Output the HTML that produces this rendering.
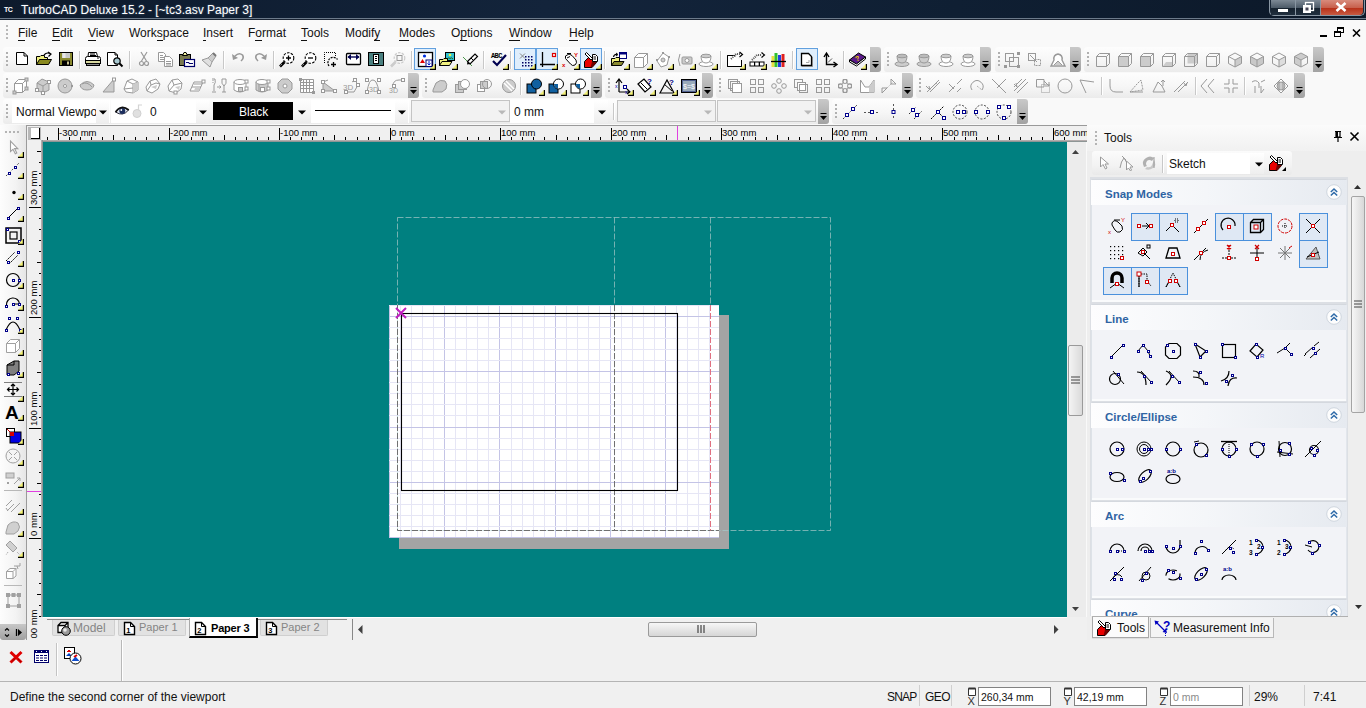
<!DOCTYPE html>
<html><head><meta charset="utf-8"><style>
*{margin:0;padding:0;box-sizing:border-box}
html,body{width:1366px;height:708px;overflow:hidden;background:#f9f9f9;font-family:"Liberation Sans",sans-serif;font-size:12px;color:#000}
body{position:relative}
.a{position:absolute}
svg{position:absolute;overflow:visible}
.t{position:absolute;white-space:nowrap;line-height:1}
u{text-decoration:none;border-bottom:1px solid currentColor;padding-bottom:0px}
</style></head><body>
<div class="a" style="left:0px;top:0px;width:1366px;height:18px;background:linear-gradient(90deg,#0d1a2c,#13243b 40%,#0f1f33 70%,#0c1828)"></div>
<div class="a" style="left:0px;top:18px;width:1366px;height:1px;background:#6c7a8a"></div>
<div class="a" style="left:0px;top:19px;width:1366px;height:1px;background:#1a2433"></div>
<div class="t" style="left:4px;top:6px;font-size:7px;font-weight:bold;color:#fff;letter-spacing:-0.5px">TC</div>
<div class="t" style="left:21px;top:4px;font-size:12px;color:#fff;text-shadow:0 0 2px rgba(160,190,220,0.5)">TurboCAD Deluxe 15.2 - [~tc3.asv Paper 3]</div>
<div class="a" style="left:1269px;top:0px;width:96px;height:16px;border:1px solid #8996a3;border-top:none;border-radius:0 0 5px 5px;background:#1b2838"></div>
<div class="a" style="left:1271px;top:0px;width:25px;height:15px;background:linear-gradient(#7d8995,#4e5c6a 50%,#16222f 55%,#202f3e);border-right:1px solid #8996a3"></div>
<div class="a" style="left:1296px;top:0px;width:25px;height:15px;background:linear-gradient(#7d8995,#4e5c6a 50%,#16222f 55%,#202f3e);border-right:1px solid #8996a3"></div>
<div class="a" style="left:1321px;top:0px;width:42px;height:15px;background:linear-gradient(#d88b7c,#c8614d 50%,#b8321a 56%,#c75a42);border-radius:0 0 4px 0"></div>
<div class="a" style="left:1278px;top:9px;width:10px;height:3px;background:#fff"></div>
<svg style="left:1302px;top:1px" width="14" height="13" viewBox="0 0 14 13" ><rect x="3.5" y="1.5" width="8" height="8" fill="none" stroke="#fff" stroke-width="1.3"/><rect x="1" y="4" width="8" height="8" fill="#fff"/><rect x="3.5" y="6.5" width="3" height="3" fill="#445"/></svg>
<svg style="left:1335px;top:2px" width="12" height="10" viewBox="0 0 12 10" ><path d="M1.5 1 L10.5 9 M10.5 1 L1.5 9" stroke="#fff" stroke-width="2.6"/></svg>
<div class="a" style="left:6px;top:25px;width:2px;height:2px;background:#b8b8b8"></div>
<div class="a" style="left:6px;top:29px;width:2px;height:2px;background:#b8b8b8"></div>
<div class="a" style="left:6px;top:33px;width:2px;height:2px;background:#b8b8b8"></div>
<div class="a" style="left:6px;top:37px;width:2px;height:2px;background:#b8b8b8"></div>
<div class="t" style="left:18px;top:27px;font-size:12px;color:#111"><u>F</u>ile</div>
<div class="t" style="left:52px;top:27px;font-size:12px;color:#111"><u>E</u>dit</div>
<div class="t" style="left:88px;top:27px;font-size:12px;color:#111"><u>V</u>iew</div>
<div class="t" style="left:129px;top:27px;font-size:12px;color:#111">Work<u>s</u>pace</div>
<div class="t" style="left:203px;top:27px;font-size:12px;color:#111"><u>I</u>nsert</div>
<div class="t" style="left:248px;top:27px;font-size:12px;color:#111">F<u>o</u>rmat</div>
<div class="t" style="left:301px;top:27px;font-size:12px;color:#111"><u>T</u>ools</div>
<div class="t" style="left:345px;top:27px;font-size:12px;color:#111">Modif<u>y</u></div>
<div class="t" style="left:399px;top:27px;font-size:12px;color:#111"><u>M</u>odes</div>
<div class="t" style="left:451px;top:27px;font-size:12px;color:#111">O<u>p</u>tions</div>
<div class="t" style="left:509px;top:27px;font-size:12px;color:#111"><u>W</u>indow</div>
<div class="t" style="left:569px;top:27px;font-size:12px;color:#111"><u>H</u>elp</div>
<div class="a" style="left:1320px;top:35px;width:7px;height:2px;background:#000"></div>
<svg style="left:1334px;top:27px" width="10" height="10" viewBox="0 0 10 10" ><rect x="3.5" y="0.5" width="6" height="5" fill="none" stroke="#000" stroke-width="1"/><rect x="3" y="0" width="7" height="2" fill="#000"/><rect x="0.5" y="4.5" width="6" height="5" fill="#fff" stroke="#000" stroke-width="1"/><rect x="0" y="4" width="7" height="2" fill="#000"/></svg>
<svg style="left:1352px;top:29px" width="9" height="8" viewBox="0 0 9 8" ><path d="M1 0.5 L8 7.5 M8 0.5 L1 7.5" stroke="#000" stroke-width="1.6"/></svg>
<div class="a" style="left:3px;top:47px;width:878px;height:25px;background:linear-gradient(#fdfdfd,#f6f6f6 55%,#ebebeb);border-radius:3px"></div>
<div class="a" style="left:6px;top:52px;width:2px;height:2px;background:#b0b0b0"></div>
<div class="a" style="left:6px;top:56px;width:2px;height:2px;background:#b0b0b0"></div>
<div class="a" style="left:6px;top:60px;width:2px;height:2px;background:#b0b0b0"></div>
<div class="a" style="left:6px;top:64px;width:2px;height:2px;background:#b0b0b0"></div>
<div class="a" style="left:870px;top:47px;width:11px;height:25px;background:linear-gradient(#c9c9c9,#a2a2a2);border-radius:0 3px 3px 0"></div>
<svg style="left:872px;top:61px" width="7" height="8" viewBox="0 0 7 8" ><path d="M0.5 0.5 H6.5" stroke="#000"/><path d="M0 3 H7 L3.5 7 Z" fill="#000"/><path d="M1 7.5 L3.5 7.5" stroke="#fff" stroke-width="0"/></svg>
<div class="a" style="left:79px;top:51px;width:1px;height:18px;background:#c8c8c8;box-shadow:1px 0 0 #fff"></div>
<div class="a" style="left:129px;top:51px;width:1px;height:18px;background:#c8c8c8;box-shadow:1px 0 0 #fff"></div>
<div class="a" style="left:223px;top:51px;width:1px;height:18px;background:#c8c8c8;box-shadow:1px 0 0 #fff"></div>
<div class="a" style="left:273px;top:51px;width:1px;height:18px;background:#c8c8c8;box-shadow:1px 0 0 #fff"></div>
<div class="a" style="left:411px;top:51px;width:1px;height:18px;background:#c8c8c8;box-shadow:1px 0 0 #fff"></div>
<div class="a" style="left:414px;top:48px;width:22px;height:22px;background:#dfeefc;border:1px solid #62a0de"></div>
<div class="a" style="left:483px;top:51px;width:1px;height:18px;background:#c8c8c8;box-shadow:1px 0 0 #fff"></div>
<div class="a" style="left:510px;top:51px;width:1px;height:18px;background:#c8c8c8;box-shadow:1px 0 0 #fff"></div>
<div class="a" style="left:514px;top:48px;width:22px;height:22px;background:#dfeefc;border:1px solid #62a0de"></div>
<div class="a" style="left:536px;top:48px;width:22px;height:22px;background:#dfeefc;border:1px solid #62a0de"></div>
<div class="a" style="left:580px;top:48px;width:22px;height:22px;background:#dfeefc;border:1px solid #62a0de"></div>
<div class="a" style="left:604px;top:51px;width:1px;height:18px;background:#c8c8c8;box-shadow:1px 0 0 #fff"></div>
<div class="a" style="left:720px;top:51px;width:1px;height:18px;background:#c8c8c8;box-shadow:1px 0 0 #fff"></div>
<div class="a" style="left:792px;top:51px;width:1px;height:18px;background:#c8c8c8;box-shadow:1px 0 0 #fff"></div>
<div class="a" style="left:796px;top:48px;width:22px;height:22px;background:#dfeefc;border:1px solid #62a0de"></div>
<div class="a" style="left:843px;top:51px;width:1px;height:18px;background:#c8c8c8;box-shadow:1px 0 0 #fff"></div>
<svg style="left:16px;top:52px" width="16" height="16" viewBox="0 0 16 16" ><path d="M0.5 0.5 H8 L11.5 4 V12.5 H0.5 Z" fill="#fff" stroke="#000"/><path d="M8 0.5 V4 H11.5" fill="none" stroke="#000"/></svg>
<svg style="left:36px;top:52px" width="16" height="16" viewBox="0 0 16 16" ><path d="M0.5 4.5 H4 L5 3.5 H8.5 V5.5 H11.5 V12.5 H0.5 Z" fill="#f0f080" stroke="#000"/><path d="M0.5 12.5 L3.5 7.5 H15.5 L12.5 12.5 Z" fill="#8a8a20" stroke="#000"/><path d="M8 3 Q10.5 0 14 1.5" fill="none" stroke="#000" stroke-width="1.2"/><path d="M12 0 L15 2 L12.5 4.5" fill="none" stroke="#000" stroke-width="1.2"/></svg>
<svg style="left:59px;top:52px" width="16" height="16" viewBox="0 0 16 16" ><rect x="0.5" y="0.5" width="13" height="13" fill="#8a8a30" stroke="#000"/><rect x="3" y="1" width="8" height="5" fill="#c8c8c8"/><rect x="3.5" y="1" width="3" height="5" fill="#e8e8e8"/><rect x="3" y="8.5" width="8" height="5" fill="#000"/><rect x="8" y="9.5" width="2" height="3" fill="#c8c090"/></svg>
<svg style="left:85px;top:52px" width="16" height="16" viewBox="0 0 16 16" ><path d="M3.5 0.5 H11.5 L12.5 4.5 H3 Z" fill="#fff" stroke="#000"/><path d="M5 2 H10 M5 3.5 H11" stroke="#000"/><path d="M0.5 6.5 Q0.5 4.5 2.5 4.5 H13.5 Q15.5 4.5 15.5 6.5 V9.5 H0.5 Z" fill="#fff" stroke="#000"/><rect x="0.5" y="8.5" width="15" height="3" fill="#d8d8a0" stroke="#000"/><rect x="1.5" y="11.5" width="13" height="2" fill="#888" stroke="#000"/><path d="M12 6 H14" stroke="#000"/></svg>
<svg style="left:107px;top:52px" width="16" height="16" viewBox="0 0 16 16" ><path d="M0.5 0.5 H8 L10.5 3 V13.5 H0.5 Z" fill="#fff" stroke="#000"/><path d="M8 0.5 V3 H10.5" fill="none" stroke="#000"/><circle cx="10" cy="9" r="3.2" fill="#a8c8d0" stroke="#000" stroke-width="1.2"/><path d="M12.3 11.3 L15.5 14.5" stroke="#000" stroke-width="2"/></svg>
<svg style="left:139px;top:52px" width="16" height="16" viewBox="0 0 16 16" ><path d="M2 0 L7.5 9 M8 0 L2.5 9" stroke="#999999" stroke-width="1.2"/><circle cx="2.5" cy="11.5" r="2" fill="none" stroke="#999999" stroke-width="1.2"/><circle cx="7.5" cy="11.5" r="2" fill="none" stroke="#999999" stroke-width="1.2"/></svg>
<svg style="left:158px;top:52px" width="16" height="16" viewBox="0 0 16 16" ><path d="M0.5 0.5 H5.5 L7.5 2.5 V9.5 H0.5 Z" fill="#fff" stroke="#999999"/><path d="M2 3.5 H5 M2 5.5 H6 M2 7.5 H6" stroke="#999999"/><path d="M6.5 4.5 H11.5 L14.5 7.5 V14.5 H6.5 Z" fill="#fff" stroke="#999999"/><path d="M8 9.5 H13 M8 11.5 H13 M8 13 H13" stroke="#999999"/></svg>
<svg style="left:179px;top:52px" width="16" height="16" viewBox="0 0 16 16" ><rect x="0.5" y="2.5" width="11" height="11" fill="#7a7a50" stroke="#000"/><path d="M3.5 3.5 L5 0.5 H7 L8.5 3.5 Z" fill="#f0f0a0" stroke="#000"/><rect x="5.5" y="7.5" width="10" height="7" fill="#fff" stroke="#00006a" stroke-width="1.2"/><path d="M7 10.5 H10 V11.5 H14" fill="none" stroke="#00006a"/></svg>
<svg style="left:201px;top:52px" width="16" height="16" viewBox="0 0 16 16" ><path d="M1 8 L7 6 L11 10 L9 15 Z" fill="#e0e0e0" stroke="#999999"/><path d="M7 6 L12 1 L15 4 L11 10" fill="#cccccc" stroke="#999999"/><path d="M12 1 L15 4" stroke="#777" stroke-width="2"/></svg>
<svg style="left:232px;top:52px" width="16" height="16" viewBox="0 0 16 16" ><path d="M3 4 Q7 0 10.5 3 Q12.5 6 9 9" fill="none" stroke="#999999" stroke-width="1.6"/><path d="M0 2 L1 8 L6 6 Z" fill="#999999"/></svg>
<svg style="left:254px;top:52px" width="16" height="16" viewBox="0 0 16 16" ><path d="M10 4 Q6 0 2.5 3 Q0.5 6 4 9" fill="none" stroke="#999999" stroke-width="1.6"/><path d="M13 2 L12 8 L7 6 Z" fill="#999999"/></svg>
<svg style="left:279px;top:52px" width="16" height="16" viewBox="0 0 16 16" ><circle cx="9.5" cy="6" r="5.3" fill="#fff" stroke="#000" stroke-width="1.1" stroke-dasharray="2.6 1.2"/><path d="M7 6 H12 M9.5 3.5 V8.5" stroke="#000" stroke-width="1.3"/><path d="M5.5 10 L1 14.5" stroke="#000" stroke-width="2.6"/><path d="M3 12 L1.5 13.5" stroke="#888" stroke-width="1"/></svg>
<svg style="left:301px;top:52px" width="16" height="16" viewBox="0 0 16 16" ><circle cx="9.5" cy="6" r="5.3" fill="#fff" stroke="#000" stroke-width="1.1" stroke-dasharray="2.6 1.2"/><path d="M7 6 H12" stroke="#000" stroke-width="1.3"/><path d="M5.5 10 L1 14.5" stroke="#000" stroke-width="2.6"/><path d="M3 12 L1.5 13.5" stroke="#888" stroke-width="1"/></svg>
<svg style="left:324px;top:52px" width="16" height="16" viewBox="0 0 16 16" ><path d="M0.5 11 V0.5 H11.5 V5" fill="none" stroke="#000" stroke-dasharray="1 1"/><path d="M5 14 A5 5 0 0 1 13.5 7.5" fill="none" stroke="#000" stroke-width="1.2" stroke-dasharray="2 1"/><path d="M9.5 10 V15 M7 12.5 H12" stroke="#000" stroke-width="1.3"/></svg>
<svg style="left:346px;top:52px" width="16" height="16" viewBox="0 0 16 16" ><rect x="0.5" y="1.5" width="14" height="11" rx="1" fill="#fff" stroke="#000" stroke-width="1.3"/><path d="M2 5 H13" stroke="#000050" stroke-width="1.4"/><path d="M1.5 5 L5 2 V8 Z M13.5 5 L10 2 V8 Z" fill="#000050"/></svg>
<svg style="left:368px;top:52px" width="16" height="16" viewBox="0 0 16 16" ><rect x="0.5" y="0.5" width="15" height="13" fill="#4a8080" stroke="#000"/><rect x="5.5" y="2.5" width="5" height="9" fill="#fff" stroke="#000"/><path d="M7 4.5 H9 M7 6.5 H9 M7 8.5 H9" stroke="#000"/></svg>
<svg style="left:390px;top:52px" width="16" height="16" viewBox="0 0 16 16" ><circle cx="9.5" cy="6" r="5.3" fill="none" stroke="#cccccc" stroke-width="1.2" stroke-dasharray="2.6 1.2"/><rect x="7" y="3.5" width="5" height="5" fill="none" stroke="#999999"/><path d="M5.5 10 L1 14.5" stroke="#cccccc" stroke-width="2.6"/></svg>
<svg style="left:418px;top:52px" width="16" height="16" viewBox="0 0 16 16" ><rect x="0.5" y="0.5" width="14" height="14" fill="#fff" stroke="#000" stroke-width="1.3"/><circle cx="6.5" cy="4" r="1.6" fill="#0030e0"/><path d="M2 11 L4.5 7 L7 11 Z" fill="#e00000"/><rect x="8" y="8" width="6" height="6.5" fill="#fff" stroke="#00007a"/><path d="M11 9 V13 M9.5 11.5 L11 13 L12.5 11.5" stroke="#0020d0" fill="none"/></svg>
<svg style="left:429.6px;top:64px" width="6" height="6" viewBox="0 0 6 6" ><path d="M0 5 L5 0 V5 Z" fill="#f2f078"/><path d="M0 5.4 H5.4 V0" fill="none" stroke="#000" stroke-width="1.2"/></svg>
<svg style="left:439px;top:52px" width="16" height="16" viewBox="0 0 16 16" ><rect x="6.5" y="0.5" width="9" height="8" fill="#30c0d0" stroke="#000"/><circle cx="11" cy="3" r="1.3" fill="#f0f040"/><path d="M8 7 Q10 5 11 6.5 Q12.5 5 14 7" fill="none" stroke="#206020"/><path d="M0.5 7.5 H4 L5 6.5 H8.5 V13.5 H0.5 Z" fill="#f0f080" stroke="#000"/><path d="M0.5 13.5 L3 9.5 H13 L10.5 13.5 Z" fill="#f0f080" stroke="#000"/></svg>
<svg style="left:451.6px;top:64px" width="6" height="6" viewBox="0 0 6 6" ><path d="M0 5 L5 0 V5 Z" fill="#f2f078"/><path d="M0 5.4 H5.4 V0" fill="none" stroke="#000" stroke-width="1.2"/></svg>
<svg style="left:462px;top:52px" width="16" height="16" viewBox="0 0 16 16" ><path d="M1 5 L10 14" stroke="#208020" stroke-width="0.8"/><path d="M5.5 9.5 L13 2 L15.5 4.5 L8 12 Z" fill="#fff" stroke="#000" stroke-width="1.2"/><path d="M5.5 9.5 L8 12 L5 12.5 Z" fill="#000"/><path d="M9 6 L11.5 8.5" stroke="#000"/></svg>
<svg style="left:491px;top:52px" width="16" height="16" viewBox="0 0 16 16" ><text x="0" y="6" font-size="7" font-family="Liberation Mono" font-weight="bold" fill="#000" letter-spacing="-0.6">ABC</text><path d="M2 9 L6 13 L15 3" fill="none" stroke="#000050" stroke-width="2.2"/></svg>
<svg style="left:502.6px;top:64px" width="6" height="6" viewBox="0 0 6 6" ><path d="M0 5 L5 0 V5 Z" fill="#f2f078"/><path d="M0 5.4 H5.4 V0" fill="none" stroke="#000" stroke-width="1.2"/></svg>
<svg style="left:518px;top:52px" width="16" height="16" viewBox="0 0 16 16" ><path d="M2 1.5 L7 6.5 M7 1.5 L2 6.5" stroke="#888"/><rect x="4" y="10" width="1.5" height="1.5" fill="#000060"/><rect x="4" y="13" width="1.5" height="1.5" fill="#000060"/><rect x="7" y="4" width="1.5" height="1.5" fill="#000060"/><rect x="7" y="7" width="1.5" height="1.5" fill="#000060"/><rect x="7" y="10" width="1.5" height="1.5" fill="#000060"/><rect x="7" y="13" width="1.5" height="1.5" fill="#000060"/><rect x="10" y="4" width="1.5" height="1.5" fill="#000060"/><rect x="10" y="7" width="1.5" height="1.5" fill="#000060"/><rect x="10" y="10" width="1.5" height="1.5" fill="#000060"/><rect x="10" y="13" width="1.5" height="1.5" fill="#000060"/><rect x="13" y="4" width="1.5" height="1.5" fill="#000060"/><rect x="13" y="7" width="1.5" height="1.5" fill="#000060"/><rect x="13" y="10" width="1.5" height="1.5" fill="#000060"/><rect x="13" y="13" width="1.5" height="1.5" fill="#000060"/></svg>
<svg style="left:529.6px;top:64px" width="6" height="6" viewBox="0 0 6 6" ><path d="M0 5 L5 0 V5 Z" fill="#f2f078"/><path d="M0 5.4 H5.4 V0" fill="none" stroke="#000" stroke-width="1.2"/></svg>
<svg style="left:537px;top:52px" width="16" height="16" viewBox="0 0 16 16" ><path d="M5.5 0 V15 M3 12.5 H18" stroke="#000" stroke-width="1.3"/><rect x="15.5" y="1.5" width="3" height="3" fill="#fff" stroke="#d00" stroke-width="1.2"/></svg>
<svg style="left:551.6px;top:64px" width="6" height="6" viewBox="0 0 6 6" ><path d="M0 5 L5 0 V5 Z" fill="#f2f078"/><path d="M0 5.4 H5.4 V0" fill="none" stroke="#000" stroke-width="1.2"/></svg>
<svg style="left:563px;top:52px" width="16" height="16" viewBox="0 0 16 16" ><path d="M4 1.5 H8 M2.5 4 L6 2 L9 3.5 L13 8 Q14.5 11 12 13 Q9.5 14.5 7.5 12 L2.5 6.5 Z M4 6 L7 4.5" fill="#fff" stroke="#000"/><text x="11" y="5" font-size="6" font-weight="bold" fill="#d00">Y</text><text x="-1" y="15" font-size="6" font-weight="bold" fill="#d00">x</text></svg>
<svg style="left:573.6px;top:64px" width="6" height="6" viewBox="0 0 6 6" ><path d="M0 5 L5 0 V5 Z" fill="#f2f078"/><path d="M0 5.4 H5.4 V0" fill="none" stroke="#000" stroke-width="1.2"/></svg>
<svg style="left:584px;top:52px" width="16" height="16" viewBox="0 0 16 16" ><path d="M0.5 9.5 L4.5 5.5 L8.5 7.5 L12.5 10.5 L8 15.5 H0.5 Z" fill="#e80000" stroke="#000"/><path d="M8.5 8 L12.5 10.5 L8 15.5 H6.5 Z" fill="#700000"/><path d="M1 2 L2.5 0.5 L8.5 6.5 L7 8 Z" fill="#fff" stroke="#000"/><path d="M8.5 2.5 H11.5 L13.5 4.5 V9.5 H8.5 Z" fill="#fff" stroke="#000"/><path d="M9.5 5 H12 M9.5 7 H12" stroke="#000"/></svg>
<svg style="left:595.6px;top:64px" width="6" height="6" viewBox="0 0 6 6" ><path d="M0 5 L5 0 V5 Z" fill="#f2f078"/><path d="M0 5.4 H5.4 V0" fill="none" stroke="#000" stroke-width="1.2"/></svg>
<svg style="left:611px;top:52px" width="16" height="16" viewBox="0 0 16 16" ><rect x="8.5" y="0.5" width="7" height="6" fill="#fff" stroke="#00007a"/><rect x="8.5" y="0.5" width="7" height="2" fill="#00007a"/><path d="M0.5 6.5 H4 L5 5.5 H8.5 V13.5 H0.5 Z" fill="#f0f080" stroke="#000"/><path d="M0.5 13.5 L3 9.5 H13 L10.5 13.5 Z" fill="#8a8a30" stroke="#000"/><path d="M2.5 5 Q3 2 6 2.5" fill="none" stroke="#000" stroke-width="1.2"/><path d="M5 1 L7 2.5 L5 4" fill="none" stroke="#000"/></svg>
<svg style="left:623.6px;top:64px" width="6" height="6" viewBox="0 0 6 6" ><path d="M0 5 L5 0 V5 Z" fill="#f2f078"/><path d="M0 5.4 H5.4 V0" fill="none" stroke="#000" stroke-width="1.2"/></svg>
<svg style="left:633px;top:52px" width="16" height="16" viewBox="0 0 16 16" ><path d="M1.5 5.5 L5.5 1.5 H14.5 V11.5 L10.5 15.5 H1.5 Z M1.5 5.5 H10.5 V15.5 M10.5 5.5 L14.5 1.5" fill="#fff" stroke="#999999"/></svg>
<svg style="left:646.6px;top:64px" width="6" height="6" viewBox="0 0 6 6" ><path d="M0 5 L5 0 V5 Z" fill="#f2f078"/><path d="M0 5.4 H5.4 V0" fill="none" stroke="#000" stroke-width="1.2"/></svg>
<svg style="left:655px;top:52px" width="16" height="16" viewBox="0 0 16 16" ><path d="M8 1 L14 5 L12 13 L6 15 L2 9 Z" fill="#fff" stroke="#999999"/><circle cx="8" cy="8" r="2" fill="#cccccc" stroke="#999999"/><rect x="1" y="7" width="2" height="2" fill="#999999"/><rect x="13" y="4" width="2" height="2" fill="#999999"/><rect x="7" y="0" width="2" height="2" fill="#999999"/></svg>
<svg style="left:667.6px;top:64px" width="6" height="6" viewBox="0 0 6 6" ><path d="M0 5 L5 0 V5 Z" fill="#f2f078"/><path d="M0 5.4 H5.4 V0" fill="none" stroke="#000" stroke-width="1.2"/></svg>
<svg style="left:677px;top:52px" width="16" height="16" viewBox="0 0 16 16" ><path d="M3 2 Q0 8 3 14" fill="none" stroke="#999999"/><rect x="5" y="5" width="10" height="7" rx="1" fill="#cccccc" stroke="#999999"/><circle cx="10" cy="8.5" r="2" fill="#fff" stroke="#999999"/></svg>
<svg style="left:689.6px;top:64px" width="6" height="6" viewBox="0 0 6 6" ><path d="M0 5 L5 0 V5 Z" fill="#f2f078"/><path d="M0 5.4 H5.4 V0" fill="none" stroke="#000" stroke-width="1.2"/></svg>
<svg style="left:698px;top:52px" width="16" height="16" viewBox="0 0 16 16" ><ellipse cx="8" cy="12" rx="7" ry="2.5" fill="#fff" stroke="#999999"/><path d="M3 4 Q3 11 8 11 Q13 11 13 4 Z" fill="#fff" stroke="#999999"/><ellipse cx="8" cy="4" rx="5" ry="1.8" fill="#cccccc" stroke="#999999"/></svg>
<svg style="left:711.6px;top:64px" width="6" height="6" viewBox="0 0 6 6" ><path d="M0 5 L5 0 V5 Z" fill="#f2f078"/><path d="M0 5.4 H5.4 V0" fill="none" stroke="#000" stroke-width="1.2"/></svg>
<svg style="left:727px;top:52px" width="16" height="16" viewBox="0 0 16 16" ><path d="M0.5 3.5 H8 V4.5 M0.5 3.5 V14.5 H14.5 V8" fill="#fff" stroke="#000"/><path d="M1 4 H8 L8 14 H1 Z" fill="#fff"/><path d="M0.5 3.5 H6 M0.5 3.5 V14.5 H14.5 V8" fill="none" stroke="#000"/><path d="M4 7 L9 2 H13" fill="none" stroke="#555" stroke-width="2" stroke-dasharray="1 1"/><path d="M12.5 0 L15.5 2.5 L12.5 5" fill="none" stroke="#000" stroke-width="1.2"/></svg>
<svg style="left:739.6px;top:64px" width="6" height="6" viewBox="0 0 6 6" ><path d="M0 5 L5 0 V5 Z" fill="#f2f078"/><path d="M0 5.4 H5.4 V0" fill="none" stroke="#000" stroke-width="1.2"/></svg>
<svg style="left:749px;top:52px" width="16" height="16" viewBox="0 0 16 16" ><rect x="0.5" y="9.5" width="15" height="5" fill="#000"/><rect x="1.5" y="10.5" width="3.5" height="3" fill="#fff"/><rect x="6.2" y="10.5" width="3.5" height="3" fill="#fff"/><rect x="11" y="10.5" width="3.5" height="3" fill="#fff"/><path d="M3 8 L8 3 H13" fill="none" stroke="#555" stroke-width="2" stroke-dasharray="1 1"/><path d="M12.5 0.5 L15.5 3 L12.5 5.5" fill="none" stroke="#000" stroke-width="1.2"/></svg>
<svg style="left:760.6px;top:64px" width="6" height="6" viewBox="0 0 6 6" ><path d="M0 5 L5 0 V5 Z" fill="#f2f078"/><path d="M0 5.4 H5.4 V0" fill="none" stroke="#000" stroke-width="1.2"/></svg>
<svg style="left:771px;top:52px" width="16" height="16" viewBox="0 0 16 16" ><rect x="0.5" y="4" width="3" height="11" fill="#e8e040"/><rect x="3.5" y="1" width="3" height="14" fill="#30c030"/><rect x="7" y="3" width="3" height="12" fill="#2040e0"/><rect x="10.5" y="2" width="3" height="13" fill="#e02020"/><path d="M0 9.5 H15" stroke="#000" stroke-width="1.3"/></svg>
<svg style="left:800px;top:52px" width="16" height="16" viewBox="0 0 16 16" ><path d="M1.5 1.5 H8.5 L11.5 4.5 V13.5 H1.5 Z" fill="#fff" stroke="#000" stroke-width="1.3"/><path d="M12.5 5 V14.5 H2" fill="none" stroke="#888"/><path d="M6 10.5 H9 V8" fill="none" stroke="#aaa"/></svg>
<svg style="left:823px;top:52px" width="16" height="16" viewBox="0 0 16 16" ><path d="M3.5 2 V12.5 H13" fill="none" stroke="#000" stroke-width="1.4"/><path d="M1 5 L3.5 1 L6 5 M10.5 10 L14 12.5 L10.5 15" fill="none" stroke="#000" stroke-width="1.4"/><path d="M5 10.5 L9 6.5" stroke="#555"/></svg>
<svg style="left:849px;top:52px" width="16" height="16" viewBox="0 0 16 16" ><path d="M0.5 8 L9.5 1 L16.5 5 L7.5 12 Z" fill="#5a1a8a" stroke="#000"/><path d="M0.5 8 V10 L7.5 14 L16.5 7 V5 L7.5 12 Z" fill="#fff" stroke="#000"/><text x="6.5" y="9" font-size="7" font-weight="bold" fill="#f0d000" transform="rotate(-20 8 7)">?</text></svg>
<svg style="left:860.6px;top:64px" width="6" height="6" viewBox="0 0 6 6" ><path d="M0 5 L5 0 V5 Z" fill="#f2f078"/><path d="M0 5.4 H5.4 V0" fill="none" stroke="#000" stroke-width="1.2"/></svg>
<div class="a" style="left:884px;top:47px;width:107px;height:25px;background:linear-gradient(#fdfdfd,#f6f6f6 55%,#ebebeb);border-radius:3px"></div>
<div class="a" style="left:887px;top:52px;width:2px;height:2px;background:#b0b0b0"></div>
<div class="a" style="left:887px;top:56px;width:2px;height:2px;background:#b0b0b0"></div>
<div class="a" style="left:887px;top:60px;width:2px;height:2px;background:#b0b0b0"></div>
<div class="a" style="left:887px;top:64px;width:2px;height:2px;background:#b0b0b0"></div>
<div class="a" style="left:980px;top:47px;width:11px;height:25px;background:linear-gradient(#c9c9c9,#a2a2a2);border-radius:0 3px 3px 0"></div>
<svg style="left:982px;top:61px" width="7" height="8" viewBox="0 0 7 8" ><path d="M0.5 0.5 H6.5" stroke="#000"/><path d="M0 3 H7 L3.5 7 Z" fill="#000"/><path d="M1 7.5 L3.5 7.5" stroke="#fff" stroke-width="0"/></svg>
<svg style="left:894px;top:52px" width="16" height="16" viewBox="0 0 16 16" ><ellipse cx="8" cy="12" rx="7" ry="2.5" fill="#cccccc" stroke="#999999"/><path d="M3 4 Q3 11 8 11 Q13 11 13 4 Z" fill="#cccccc" stroke="#999999"/><ellipse cx="8" cy="4" rx="5" ry="1.8" fill="#bbb" stroke="#999999"/></svg>
<svg style="left:916px;top:52px" width="16" height="16" viewBox="0 0 16 16" ><ellipse cx="8" cy="12" rx="7" ry="2.5" fill="#cccccc" stroke="#999999"/><path d="M3 4 Q3 11 8 11 Q13 11 13 4 Z" fill="#cccccc" stroke="#999999"/><ellipse cx="8" cy="4" rx="5" ry="1.8" fill="#bbb" stroke="#999999"/></svg>
<svg style="left:938px;top:52px" width="16" height="16" viewBox="0 0 16 16" ><ellipse cx="8" cy="12" rx="7" ry="2.5" fill="#fff" stroke="#999999"/><path d="M3 4 Q3 11 8 11 Q13 11 13 4 Z" fill="#fff" stroke="#999999"/><ellipse cx="8" cy="4" rx="5" ry="1.8" fill="#cccccc" stroke="#999999"/></svg>
<svg style="left:960px;top:52px" width="16" height="16" viewBox="0 0 16 16" ><ellipse cx="8" cy="12" rx="7" ry="2.5" fill="#fff" stroke="#999999"/><path d="M3 4 Q3 11 8 11 Q13 11 13 4 Z" fill="#fff" stroke="#999999"/><ellipse cx="8" cy="4" rx="5" ry="1.8" fill="#cccccc" stroke="#999999"/></svg>
<div class="a" style="left:995px;top:47px;width:86px;height:25px;background:linear-gradient(#fdfdfd,#f6f6f6 55%,#ebebeb);border-radius:3px"></div>
<div class="a" style="left:998px;top:52px;width:2px;height:2px;background:#b0b0b0"></div>
<div class="a" style="left:998px;top:56px;width:2px;height:2px;background:#b0b0b0"></div>
<div class="a" style="left:998px;top:60px;width:2px;height:2px;background:#b0b0b0"></div>
<div class="a" style="left:998px;top:64px;width:2px;height:2px;background:#b0b0b0"></div>
<div class="a" style="left:1070px;top:47px;width:11px;height:25px;background:linear-gradient(#c9c9c9,#a2a2a2);border-radius:0 3px 3px 0"></div>
<svg style="left:1072px;top:61px" width="7" height="8" viewBox="0 0 7 8" ><path d="M0.5 0.5 H6.5" stroke="#000"/><path d="M0 3 H7 L3.5 7 Z" fill="#000"/><path d="M1 7.5 L3.5 7.5" stroke="#fff" stroke-width="0"/></svg>
<svg style="left:1004px;top:52px" width="16" height="16" viewBox="0 0 16 16" ><rect x="1.5" y="1.5" width="8" height="8" fill="none" stroke="#999999"/><rect x="5.5" y="5.5" width="9" height="9" fill="none" stroke="#999999"/><rect x="0" y="13" width="3" height="3" fill="#999999"/><rect x="13" y="0" width="3" height="3" fill="#999999"/><rect x="13" y="13" width="3" height="3" fill="#999999"/></svg>
<svg style="left:1027px;top:52px" width="16" height="16" viewBox="0 0 16 16" ><rect x="1.5" y="1.5" width="7" height="7" fill="none" stroke="#999999"/><rect x="7.5" y="7.5" width="6" height="6" fill="none" stroke="#999999" stroke-dasharray="2 1"/><path d="M3 3 L10 10" stroke="#999999"/></svg>
<svg style="left:1050px;top:52px" width="16" height="16" viewBox="0 0 16 16" ><path d="M4 8 Q3 3 8 2 Q13 3 12 8 L15 14 H1 Z" fill="#fff" stroke="#999999" stroke-width="1.4"/><path d="M4 13 L8 9 L12 13" fill="#cccccc" stroke="#999999"/></svg>
<div class="a" style="left:1084px;top:47px;width:240px;height:25px;background:linear-gradient(#fdfdfd,#f6f6f6 55%,#ebebeb);border-radius:3px"></div>
<div class="a" style="left:1087px;top:52px;width:2px;height:2px;background:#b0b0b0"></div>
<div class="a" style="left:1087px;top:56px;width:2px;height:2px;background:#b0b0b0"></div>
<div class="a" style="left:1087px;top:60px;width:2px;height:2px;background:#b0b0b0"></div>
<div class="a" style="left:1087px;top:64px;width:2px;height:2px;background:#b0b0b0"></div>
<div class="a" style="left:1313px;top:47px;width:11px;height:25px;background:linear-gradient(#c9c9c9,#a2a2a2);border-radius:0 3px 3px 0"></div>
<svg style="left:1315px;top:61px" width="7" height="8" viewBox="0 0 7 8" ><path d="M0.5 0.5 H6.5" stroke="#000"/><path d="M0 3 H7 L3.5 7 Z" fill="#000"/><path d="M1 7.5 L3.5 7.5" stroke="#fff" stroke-width="0"/></svg>
<svg style="left:1095px;top:52px" width="16" height="16" viewBox="0 0 16 16" ><path d="M1.5 4.5 L4.5 1.5 H14.5 V11.5 L11.5 14.5 H1.5 Z M1.5 4.5 H11.5 V14.5 M11.5 4.5 L14.5 1.5" fill="none" stroke="#999999"/></svg>
<svg style="left:1117px;top:52px" width="16" height="16" viewBox="0 0 16 16" ><path d="M1.5 4.5 H11.5 V14.5 H1.5 Z" fill="#cccccc"/><path d="M1.5 4.5 L4.5 1.5 H14.5 V11.5 L11.5 14.5 H1.5 Z M1.5 4.5 H11.5 V14.5 M11.5 4.5 L14.5 1.5" fill="none" stroke="#999999"/></svg>
<svg style="left:1139px;top:52px" width="16" height="16" viewBox="0 0 16 16" ><path d="M1.5 4.5 H11.5 V14.5 H1.5Z" fill="#ccc"/><path d="M1.5 4.5 L4.5 1.5 H14.5 V11.5 L11.5 14.5 H1.5 Z M1.5 4.5 H11.5 V14.5 M11.5 4.5 L14.5 1.5" fill="none" stroke="#999999"/></svg>
<svg style="left:1161px;top:52px" width="16" height="16" viewBox="0 0 16 16" ><path d="M2 14 L5 10 H11 V14 Z" fill="#cccccc"/><path d="M1.5 4.5 L4.5 1.5 H14.5 V11.5 L11.5 14.5 H1.5 Z M1.5 4.5 H11.5 V14.5 M11.5 4.5 L14.5 1.5" fill="none" stroke="#999999"/></svg>
<svg style="left:1183px;top:52px" width="16" height="16" viewBox="0 0 16 16" ><path d="M4.5 1.5 H14.5 V11.5 H4.5 Z" fill="#cccccc"/><path d="M1.5 4.5 L4.5 1.5 H14.5 V11.5 L11.5 14.5 H1.5 Z M1.5 4.5 H11.5 V14.5 M11.5 4.5 L14.5 1.5" fill="none" stroke="#999999"/></svg>
<svg style="left:1205px;top:52px" width="16" height="16" viewBox="0 0 16 16" ><path d="M1.5 4.5 L4.5 1.5 H14.5 V11.5 L11.5 14.5 H1.5 Z M1.5 4.5 H11.5 V14.5 M11.5 4.5 L14.5 1.5" fill="none" stroke="#999999"/></svg>
<svg style="left:1227px;top:52px" width="16" height="16" viewBox="0 0 16 16" ><path d="M8 8 L14.5 4.5 V11.5 L8 15Z" fill="#cccccc"/><path d="M8 1 L14.5 4.5 V11.5 L8 15 L1.5 11.5 V4.5 Z M1.5 4.5 L8 8 L14.5 4.5 M8 8 V15" fill="none" stroke="#999999"/></svg>
<svg style="left:1249px;top:52px" width="16" height="16" viewBox="0 0 16 16" ><path d="M1.5 4.5 L8 8 V15 L1.5 11.5 Z M8 8 L14.5 4.5 V11.5 L8 15Z" fill="#c8c8c8"/><path d="M8 1 L14.5 4.5 V11.5 L8 15 L1.5 11.5 V4.5 Z M1.5 4.5 L8 8 L14.5 4.5 M8 8 V15" fill="none" stroke="#999999"/></svg>
<svg style="left:1271px;top:52px" width="16" height="16" viewBox="0 0 16 16" ><path d="M8 8 L14.5 4.5 V11.5 L8 15Z" fill="#ddd"/><path d="M8 1 L14.5 4.5 V11.5 L8 15 L1.5 11.5 V4.5 Z M1.5 4.5 L8 8 L14.5 4.5 M8 8 V15" fill="none" stroke="#999999"/></svg>
<svg style="left:1293px;top:52px" width="16" height="16" viewBox="0 0 16 16" ><path d="M1.5 4.5 L8 1 L14.5 4.5 L8 8Z M1.5 4.5 L8 8 V15 L1.5 11.5 Z" fill="#ccc"/><path d="M8 1 L14.5 4.5 V11.5 L8 15 L1.5 11.5 V4.5 Z M1.5 4.5 L8 8 L14.5 4.5 M8 8 V15" fill="none" stroke="#999999"/></svg>
<div class="a" style="left:3px;top:73px;width:416px;height:25px;background:linear-gradient(#fdfdfd,#f6f6f6 55%,#ebebeb);border-radius:3px"></div>
<div class="a" style="left:6px;top:78px;width:2px;height:2px;background:#b0b0b0"></div>
<div class="a" style="left:6px;top:82px;width:2px;height:2px;background:#b0b0b0"></div>
<div class="a" style="left:6px;top:86px;width:2px;height:2px;background:#b0b0b0"></div>
<div class="a" style="left:6px;top:90px;width:2px;height:2px;background:#b0b0b0"></div>
<div class="a" style="left:408px;top:73px;width:11px;height:25px;background:linear-gradient(#c9c9c9,#a2a2a2);border-radius:0 3px 3px 0"></div>
<svg style="left:410px;top:87px" width="7" height="8" viewBox="0 0 7 8" ><path d="M0.5 0.5 H6.5" stroke="#000"/><path d="M0 3 H7 L3.5 7 Z" fill="#000"/><path d="M1 7.5 L3.5 7.5" stroke="#fff" stroke-width="0"/></svg>
<svg style="left:13px;top:78px" width="16" height="16" viewBox="0 0 16 16" ><path d="M1.5 5.5 L5.5 1.5 H13.5 V10.5 L9.5 14.5 H1.5 Z M1.5 5.5 H9.5 V14.5 M9.5 5.5 L13.5 1.5" fill="#fff" stroke="#999999"/><rect x="0.0" y="13.0" width="3" height="3" fill="#cccccc" stroke="#999999"/><rect x="12.0" y="0.0" width="3" height="3" fill="#cccccc" stroke="#999999"/><rect x="12.0" y="9.0" width="3" height="3" fill="#cccccc" stroke="#999999"/></svg>
<svg style="left:35px;top:78px" width="16" height="16" viewBox="0 0 16 16" ><path d="M2 5 L7 1 L14 4 V12 L8 15 L2 12 Z" fill="#cccccc" stroke="#999999"/><path d="M2 5 L8 8 L14 4 M8 8 V15" stroke="#999999" fill="none"/><rect x="0.5" y="10.5" width="3" height="3" fill="#fff" stroke="#999999"/><rect x="6.5" y="13.5" width="3" height="3" fill="#fff" stroke="#999999"/><rect x="12.5" y="2.5" width="3" height="3" fill="#fff" stroke="#999999"/></svg>
<svg style="left:57px;top:78px" width="16" height="16" viewBox="0 0 16 16" ><circle cx="8" cy="8" r="7" fill="#cccccc" stroke="#999999"/><circle cx="8" cy="8" r="1.5" fill="#fff" stroke="#999999"/><rect x="14" y="7" width="2" height="2" fill="#999999"/></svg>
<svg style="left:79px;top:78px" width="16" height="16" viewBox="0 0 16 16" ><path d="M1 7 Q8 0 15 7 Q14 12 8 12 Q2 12 1 7 Z" fill="#cccccc" stroke="#999999"/><path d="M3 6 Q8 3 13 9" fill="none" stroke="#999999"/></svg>
<svg style="left:101px;top:78px" width="16" height="16" viewBox="0 0 16 16" ><path d="M2 14 L13 1 V14 Z" fill="#cccccc" stroke="#999999"/><rect x="11.5" y="0" width="3" height="3" fill="#fff" stroke="#999999"/></svg>
<svg style="left:123px;top:78px" width="16" height="16" viewBox="0 0 16 16" ><path d="M1 11 L4 3 L9 1 L15 4 V12 L10 15 L3 14 Z" fill="#fff" stroke="#999999"/><path d="M4 3 L10 6 L15 4 M10 6 V15 M1 11 L10 10" fill="none" stroke="#999999"/><path d="M10 6 L15 4 V12 L10 15 Z" fill="#cccccc"/></svg>
<svg style="left:145px;top:78px" width="16" height="16" viewBox="0 0 16 16" ><path d="M1 9 L5 3 L11 1 L15 6 L13 11 L7 15 L2 13 Z" fill="#fff" stroke="#999999"/><path d="M5 3 L6 7 L11 5 L15 6 M6 7 L2 13" fill="none" stroke="#999999"/><path d="M6 9 L12 7 L11 11 Z" fill="#cccccc"/></svg>
<svg style="left:167px;top:78px" width="16" height="16" viewBox="0 0 16 16" ><path d="M1 8 L5 2 L11 1 L15 5 L14 11 L9 15 L2 13 Z" fill="#fff" stroke="#999999"/><path d="M5 2 L7 7 L15 5 M7 7 L2 13" fill="none" stroke="#999999"/><path d="M8 9 L13 8 L12 12 Z" fill="#cccccc"/><rect x="7" y="13" width="3" height="3" fill="#fff" stroke="#999999"/></svg>
<svg style="left:189px;top:78px" width="16" height="16" viewBox="0 0 16 16" ><path d="M1 13 L5 4 H14 L10 13 Z" fill="#fff" stroke="#999999"/><path d="M3 9 H12 M5 6 H13" stroke="#999999"/><path d="M6 10 H11 L10 13 H5 Z" fill="#cccccc"/><rect x="13" y="2" width="3" height="3" fill="#fff" stroke="#999999"/></svg>
<svg style="left:211px;top:78px" width="16" height="16" viewBox="0 0 16 16" ><path d="M1 1 H4 Q5 5 3 7 V13 M1 14 H5 M11 1 H15 Q16 6 13 8 V14 M11 14 H15 M11 1 Q10 6 13 8 M6 9 H10 M8.5 7.5 L10 9 L8.5 10.5" fill="none" stroke="#999999"/><path d="M2 2 V5" stroke="#999999" stroke-dasharray="1 1"/></svg>
<svg style="left:233px;top:78px" width="16" height="16" viewBox="0 0 16 16" ><path d="M1 4 V12 Q7 16 13 12 V4" fill="#fff" stroke="#999999"/><ellipse cx="7" cy="4" rx="6" ry="2.5" fill="#fff" stroke="#999999"/><rect x="5.5" y="9.5" width="4" height="4" fill="#cccccc" stroke="#999999"/><rect x="12" y="2" width="3" height="3" fill="#fff" stroke="#999999"/><rect x="12" y="9" width="3" height="3" fill="#fff" stroke="#999999"/></svg>
<svg style="left:255px;top:78px" width="16" height="16" viewBox="0 0 16 16" ><path d="M1 4 V12 Q7 16 13 12 V4" fill="#cccccc" stroke="#999999"/><ellipse cx="7" cy="4" rx="6" ry="2.5" fill="#fff" stroke="#999999"/><path d="M4 6 V13" stroke="#999999"/><rect x="5.5" y="9.5" width="4" height="4" fill="#fff" stroke="#999999"/><rect x="12" y="2" width="3" height="3" fill="#fff" stroke="#999999"/><rect x="12" y="9" width="3" height="3" fill="#fff" stroke="#999999"/></svg>
<svg style="left:277px;top:78px" width="16" height="16" viewBox="0 0 16 16" ><path d="M5 1 H11 L15 5 V11 L11 15 H5 L1 11 V5 Z" fill="#cccccc" stroke="#999999"/><circle cx="8" cy="8" r="2" fill="#fff" stroke="#999999"/></svg>
<svg style="left:299px;top:78px" width="16" height="16" viewBox="0 0 16 16" ><path d="M1.5 1.5 H14.5 V14.5 H1.5 Z M1.5 4.5 H14.5 M1.5 7.5 H14.5 M1.5 10.5 H14.5 M4.5 1.5 V14.5 M7.5 1.5 V14.5 M10.5 1.5 V14.5" fill="#fff" stroke="#999999"/><rect x="0" y="0" width="3" height="3" fill="#999999"/><rect x="13" y="13" width="3" height="3" fill="#999999"/></svg>
<svg style="left:321px;top:78px" width="16" height="16" viewBox="0 0 16 16" ><path d="M2 4 L14 13 H2 Z" fill="#cccccc" stroke="#999999"/><path d="M2 4 L7 2" stroke="#999999"/><rect x="0.5" y="2.5" width="3" height="3" fill="#fff" stroke="#999999"/><rect x="12.5" y="11.5" width="3" height="3" fill="#fff" stroke="#999999"/><rect x="0.5" y="11.5" width="3" height="3" fill="#fff" stroke="#999999"/></svg>
<svg style="left:343px;top:78px" width="16" height="16" viewBox="0 0 16 16" ><text x="0" y="12" font-size="8" font-family="Liberation Sans" fill="#999999">3D</text><path d="M9 4 L12 2 L15 7 L11 14 H3" fill="none" stroke="#999999"/><rect x="10.5" y="0.5" width="3" height="3" fill="#fff" stroke="#999999"/><rect x="13.5" y="5.5" width="3" height="3" fill="#fff" stroke="#999999"/><rect x="1.5" y="12.5" width="3" height="3" fill="#fff" stroke="#999999"/></svg>
<svg style="left:365px;top:78px" width="16" height="16" viewBox="0 0 16 16" ><path d="M2 14 Q4 1 8 2 Q12 2 14 14" fill="none" stroke="#999999"/><text x="4" y="14" font-size="7" font-family="Liberation Sans" fill="#999999">3D</text><rect x="0.5" y="0.5" width="3" height="3" fill="#fff" stroke="#999999"/><rect x="12.5" y="0.5" width="3" height="3" fill="#fff" stroke="#999999"/><rect x="0.5" y="12.5" width="3" height="3" fill="#fff" stroke="#999999"/><rect x="12.5" y="12.5" width="3" height="3" fill="#fff" stroke="#999999"/></svg>
<svg style="left:389px;top:78px" width="16" height="16" viewBox="0 0 16 16" ><path d="M4 8 Q4 2 10 2 L14 2" fill="none" stroke="#999999"/><text x="0" y="15" font-size="7" font-family="Liberation Sans" fill="#999999">3D</text><rect x="12.5" y="0.5" width="3" height="3" fill="#fff" stroke="#999999"/><rect x="3.5" y="6.5" width="3" height="3" fill="#fff" stroke="#999999"/></svg>
<div class="a" style="left:422px;top:73px;width:180px;height:25px;background:linear-gradient(#fdfdfd,#f6f6f6 55%,#ebebeb);border-radius:3px"></div>
<div class="a" style="left:425px;top:78px;width:2px;height:2px;background:#b0b0b0"></div>
<div class="a" style="left:425px;top:82px;width:2px;height:2px;background:#b0b0b0"></div>
<div class="a" style="left:425px;top:86px;width:2px;height:2px;background:#b0b0b0"></div>
<div class="a" style="left:425px;top:90px;width:2px;height:2px;background:#b0b0b0"></div>
<div class="a" style="left:591px;top:73px;width:11px;height:25px;background:linear-gradient(#c9c9c9,#a2a2a2);border-radius:0 3px 3px 0"></div>
<svg style="left:593px;top:87px" width="7" height="8" viewBox="0 0 7 8" ><path d="M0.5 0.5 H6.5" stroke="#000"/><path d="M0 3 H7 L3.5 7 Z" fill="#000"/><path d="M1 7.5 L3.5 7.5" stroke="#fff" stroke-width="0"/></svg>
<svg style="left:432px;top:78px" width="16" height="16" viewBox="0 0 16 16" ><path d="M1 12 L4 5 Q8 1 13 3 Q16 6 14 11 L10 14 H1 Z" fill="#cccccc" stroke="#999999"/></svg>
<svg style="left:454px;top:78px" width="16" height="16" viewBox="0 0 16 16" ><rect x="1.5" y="6.5" width="8" height="8" fill="#cccccc" stroke="#999999"/><rect x="4.5" y="3.5" width="8" height="8" fill="#cccccc" stroke="#999999"/><circle cx="11" cy="6" r="4.5" fill="#fff" stroke="#999999"/></svg>
<svg style="left:476px;top:78px" width="16" height="16" viewBox="0 0 16 16" ><rect x="1.5" y="6.5" width="7" height="7" fill="#fff" stroke="#999999"/><rect x="4.5" y="3.5" width="7" height="7" fill="#cccccc" stroke="#999999"/><circle cx="11" cy="6" r="4.5" fill="none" stroke="#999999"/></svg>
<svg style="left:501px;top:78px" width="16" height="16" viewBox="0 0 16 16" ><circle cx="8" cy="8" r="6.5" fill="#cccccc" stroke="#999999"/><path d="M3 5 L11 13 M5 3 L13 11" stroke="#fff" stroke-width="1.5"/></svg>
<div class="a" style="left:520px;top:77px;width:1px;height:18px;background:#c8c8c8;box-shadow:1px 0 0 #fff"></div>
<svg style="left:526px;top:78px" width="16" height="16" viewBox="0 0 16 16" ><rect x="1" y="6" width="9" height="9" fill="#1060a0" stroke="#000"/><circle cx="10.5" cy="6" r="5" fill="#1060a0" stroke="#000"/></svg>
<svg style="left:539px;top:90px" width="6" height="6" viewBox="0 0 6 6" ><path d="M0 5 L5 0 V5 Z" fill="#f2f078"/><path d="M0 5.4 H5.4 V0" fill="none" stroke="#000" stroke-width="1.2"/></svg>
<svg style="left:548px;top:78px" width="16" height="16" viewBox="0 0 16 16" ><rect x="1" y="6" width="9" height="9" fill="#1060a0" stroke="#000"/><circle cx="10.5" cy="6" r="5" fill="#fff" stroke="#000"/><path d="M6 6 H10 V10.5 Q6 10 6 6Z" fill="#1060a0"/></svg>
<svg style="left:561px;top:90px" width="6" height="6" viewBox="0 0 6 6" ><path d="M0 5 L5 0 V5 Z" fill="#f2f078"/><path d="M0 5.4 H5.4 V0" fill="none" stroke="#000" stroke-width="1.2"/></svg>
<svg style="left:570px;top:78px" width="16" height="16" viewBox="0 0 16 16" ><rect x="1" y="6" width="9" height="9" fill="#fff" stroke="#000"/><circle cx="10.5" cy="6" r="5" fill="#fff" stroke="#000"/><path d="M6 6 H10 V10.5 Q6 10 6 6Z" fill="#1060a0"/></svg>
<svg style="left:583px;top:90px" width="6" height="6" viewBox="0 0 6 6" ><path d="M0 5 L5 0 V5 Z" fill="#f2f078"/><path d="M0 5.4 H5.4 V0" fill="none" stroke="#000" stroke-width="1.2"/></svg>
<div class="a" style="left:605px;top:73px;width:108px;height:25px;background:linear-gradient(#fdfdfd,#f6f6f6 55%,#ebebeb);border-radius:3px"></div>
<div class="a" style="left:608px;top:78px;width:2px;height:2px;background:#b0b0b0"></div>
<div class="a" style="left:608px;top:82px;width:2px;height:2px;background:#b0b0b0"></div>
<div class="a" style="left:608px;top:86px;width:2px;height:2px;background:#b0b0b0"></div>
<div class="a" style="left:608px;top:90px;width:2px;height:2px;background:#b0b0b0"></div>
<div class="a" style="left:702px;top:73px;width:11px;height:25px;background:linear-gradient(#c9c9c9,#a2a2a2);border-radius:0 3px 3px 0"></div>
<svg style="left:704px;top:87px" width="7" height="8" viewBox="0 0 7 8" ><path d="M0.5 0.5 H6.5" stroke="#000"/><path d="M0 3 H7 L3.5 7 Z" fill="#000"/><path d="M1 7.5 L3.5 7.5" stroke="#fff" stroke-width="0"/></svg>
<svg style="left:615px;top:78px" width="16" height="16" viewBox="0 0 16 16" ><path d="M4 14 V2 M1 5 L4 1 L7 5 M4 14 L15 14 M12 11 L15 14 L12 16" fill="none" stroke="#000" stroke-width="1.2"/><rect x="8.5" y="7.5" width="3" height="3" fill="#fff" stroke="#00008b" stroke-width="1"/><text x="0" y="10" font-size="5" fill="#00a">x</text><text x="10" y="16" font-size="5" fill="#00a">x</text></svg>
<svg style="left:628px;top:90px" width="6" height="6" viewBox="0 0 6 6" ><path d="M0 5 L5 0 V5 Z" fill="#f2f078"/><path d="M0 5.4 H5.4 V0" fill="none" stroke="#000" stroke-width="1.2"/></svg>
<svg style="left:637px;top:78px" width="16" height="16" viewBox="0 0 16 16" ><path d="M1 6 L7 1 L14 9 L8 14 Z" fill="#fff" stroke="#000" stroke-width="1.2"/><path d="M4 5 L10 11" stroke="#000"/><text x="10" y="6" font-size="8" font-weight="bold" fill="#000080">?</text></svg>
<svg style="left:650px;top:90px" width="6" height="6" viewBox="0 0 6 6" ><path d="M0 5 L5 0 V5 Z" fill="#f2f078"/><path d="M0 5.4 H5.4 V0" fill="none" stroke="#000" stroke-width="1.2"/></svg>
<svg style="left:659px;top:78px" width="16" height="16" viewBox="0 0 16 16" ><path d="M1 15 L8 2 L15 15 Z M1 15 H15" fill="none" stroke="#000" stroke-width="1.2"/><path d="M5 6 L13 13" stroke="#000"/><text x="10" y="7" font-size="8" font-weight="bold" fill="#000080">?</text></svg>
<svg style="left:672px;top:90px" width="6" height="6" viewBox="0 0 6 6" ><path d="M0 5 L5 0 V5 Z" fill="#f2f078"/><path d="M0 5.4 H5.4 V0" fill="none" stroke="#000" stroke-width="1.2"/></svg>
<svg style="left:681px;top:78px" width="16" height="16" viewBox="0 0 16 16" ><rect x="0.5" y="1.5" width="15" height="13" fill="#506090" stroke="#000"/><rect x="2" y="3" width="12" height="10" fill="#9ab"/><text x="2" y="11" font-size="7" fill="#fff">$=$</text></svg>
<svg style="left:694px;top:90px" width="6" height="6" viewBox="0 0 6 6" ><path d="M0 5 L5 0 V5 Z" fill="#f2f078"/><path d="M0 5.4 H5.4 V0" fill="none" stroke="#000" stroke-width="1.2"/></svg>
<div class="a" style="left:716px;top:73px;width:197px;height:25px;background:linear-gradient(#fdfdfd,#f6f6f6 55%,#ebebeb);border-radius:3px"></div>
<div class="a" style="left:719px;top:78px;width:2px;height:2px;background:#b0b0b0"></div>
<div class="a" style="left:719px;top:82px;width:2px;height:2px;background:#b0b0b0"></div>
<div class="a" style="left:719px;top:86px;width:2px;height:2px;background:#b0b0b0"></div>
<div class="a" style="left:719px;top:90px;width:2px;height:2px;background:#b0b0b0"></div>
<div class="a" style="left:902px;top:73px;width:11px;height:25px;background:linear-gradient(#c9c9c9,#a2a2a2);border-radius:0 3px 3px 0"></div>
<svg style="left:904px;top:87px" width="7" height="8" viewBox="0 0 7 8" ><path d="M0.5 0.5 H6.5" stroke="#000"/><path d="M0 3 H7 L3.5 7 Z" fill="#000"/><path d="M1 7.5 L3.5 7.5" stroke="#fff" stroke-width="0"/></svg>
<svg style="left:727px;top:78px" width="16" height="16" viewBox="0 0 16 16" ><rect x="1.5" y="1.5" width="9" height="9" fill="none" stroke="#999999"/><rect x="3.5" y="3.5" width="9" height="9" fill="none" stroke="#999999"/><rect x="5.5" y="5.5" width="9" height="9" fill="#fff" stroke="#999999"/></svg>
<svg style="left:749px;top:78px" width="16" height="16" viewBox="0 0 16 16" ><rect x="1.5" y="1.5" width="5" height="5" fill="none" stroke="#999999"/><rect x="9.5" y="1.5" width="5" height="5" fill="none" stroke="#999999"/><rect x="1.5" y="9.5" width="5" height="5" fill="none" stroke="#999999"/><rect x="9.5" y="9.5" width="5" height="5" fill="none" stroke="#999999"/></svg>
<svg style="left:771px;top:78px" width="16" height="16" viewBox="0 0 16 16" ><circle cx="8" cy="3" r="2.3" fill="none" stroke="#999999"/><circle cx="3" cy="8" r="2.3" fill="none" stroke="#999999"/><circle cx="13" cy="8" r="2.3" fill="none" stroke="#999999"/><circle cx="8" cy="13" r="2.3" fill="none" stroke="#999999"/></svg>
<svg style="left:793px;top:78px" width="16" height="16" viewBox="0 0 16 16" ><rect x="1.5" y="1.5" width="8" height="8" fill="none" stroke="#999999"/><rect x="4.5" y="4.5" width="8" height="8" fill="#fff" stroke="#999999"/><rect x="6.5" y="6.5" width="8" height="8" fill="none" stroke="#999999"/></svg>
<svg style="left:815px;top:78px" width="16" height="16" viewBox="0 0 16 16" ><rect x="1.5" y="1.5" width="5" height="5" fill="none" stroke="#999999"/><rect x="9.5" y="1.5" width="5" height="5" fill="none" stroke="#999999"/><rect x="1.5" y="9.5" width="5" height="5" fill="none" stroke="#999999"/><rect x="9.5" y="9.5" width="5" height="5" fill="none" stroke="#999999"/></svg>
<svg style="left:837px;top:78px" width="16" height="16" viewBox="0 0 16 16" ><path d="M6 1.5 H10 V6 H14.5 V10 H10 V14.5 H6 V10 H1.5 V6 H6 Z" fill="none" stroke="#999999"/><circle cx="8" cy="3.5" r="2" fill="none" stroke="#999999"/><circle cx="3.5" cy="8" r="2" fill="none" stroke="#999999"/><circle cx="12.5" cy="8" r="2" fill="none" stroke="#999999"/><circle cx="8" cy="12.5" r="2" fill="none" stroke="#999999"/></svg>
<svg style="left:859px;top:78px" width="16" height="16" viewBox="0 0 16 16" ><path d="M1.5 2 V14.5 H15 V2 L10 9 H6 Z" fill="#fff" stroke="#999999"/><path d="M10 9 L15 2 V14.5 H10 Z" fill="#cccccc"/></svg>
<svg style="left:881px;top:78px" width="16" height="16" viewBox="0 0 16 16" ><path d="M1 15 V10 H6 Z M10 1 L15 6 H10 Z" fill="none" stroke="#999999"/><path d="M2 14 L12 4" stroke="#999999" stroke-dasharray="1 1"/></svg>
<div class="a" style="left:916px;top:73px;width:389px;height:25px;background:linear-gradient(#fdfdfd,#f6f6f6 55%,#ebebeb);border-radius:3px"></div>
<div class="a" style="left:919px;top:78px;width:2px;height:2px;background:#b0b0b0"></div>
<div class="a" style="left:919px;top:82px;width:2px;height:2px;background:#b0b0b0"></div>
<div class="a" style="left:919px;top:86px;width:2px;height:2px;background:#b0b0b0"></div>
<div class="a" style="left:919px;top:90px;width:2px;height:2px;background:#b0b0b0"></div>
<div class="a" style="left:1294px;top:73px;width:11px;height:25px;background:linear-gradient(#c9c9c9,#a2a2a2);border-radius:0 3px 3px 0"></div>
<svg style="left:1296px;top:87px" width="7" height="8" viewBox="0 0 7 8" ><path d="M0.5 0.5 H6.5" stroke="#000"/><path d="M0 3 H7 L3.5 7 Z" fill="#000"/><path d="M1 7.5 L3.5 7.5" stroke="#fff" stroke-width="0"/></svg>
<svg style="left:925px;top:78px" width="16" height="16" viewBox="0 0 16 16" ><path d="M2 14 L14 2 M5 14 L15 4" stroke="#999999"/><path d="M1 8 L5 12 L4 8" fill="none" stroke="#999999"/><path d="M8 8 L12 5" stroke="#999999" stroke-dasharray="1 1"/></svg>
<svg style="left:947px;top:78px" width="16" height="16" viewBox="0 0 16 16" ><path d="M2 14 L8 8 M10 6 L15 1 M2 6 L7 11 M10 14 L14 10" stroke="#999999"/></svg>
<svg style="left:969px;top:78px" width="16" height="16" viewBox="0 0 16 16" ><path d="M3 12 A6 6 0 1 1 13 12" fill="none" stroke="#999999"/><path d="M8 8 L13 12" stroke="#999999" stroke-dasharray="1 1"/></svg>
<svg style="left:991px;top:78px" width="16" height="16" viewBox="0 0 16 16" ><path d="M1 1 L15 15 M15 1 L6 10" stroke="#999999"/></svg>
<svg style="left:1013px;top:78px" width="16" height="16" viewBox="0 0 16 16" ><path d="M1 13 L13 1 M4 15 L15 4 M1 9 L9 1 M1 6 L4 9 L3 5" fill="none" stroke="#999999"/></svg>
<svg style="left:1035px;top:78px" width="16" height="16" viewBox="0 0 16 16" ><path d="M1.5 1.5 H9 V9 H1.5 Z" fill="none" stroke="#999999"/><path d="M6.5 6.5 H14.5 V14.5 H6.5 Z" fill="none" stroke="#999999" stroke-dasharray="1 1"/><path d="M9 3 L14 8 M14 4 V8 H10" fill="none" stroke="#999999"/></svg>
<svg style="left:1057px;top:78px" width="16" height="16" viewBox="0 0 16 16" ><circle cx="8" cy="8" r="7" fill="none" stroke="#999999"/></svg>
<svg style="left:1079px;top:78px" width="16" height="16" viewBox="0 0 16 16" ><path d="M1 2 L15 4 M1 2 L7 15" fill="none" stroke="#999999"/></svg>
<svg style="left:1108px;top:78px" width="16" height="16" viewBox="0 0 16 16" ><path d="M2 1 V8 Q2 14 8 14 H15" fill="none" stroke="#999999"/></svg>
<svg style="left:1129px;top:78px" width="16" height="16" viewBox="0 0 16 16" ><path d="M1 14 L8 6 L12 2 L14 12 Z" fill="none" stroke="#999999" stroke-dasharray="2 1"/><path d="M1 14 H14" stroke="#999999"/></svg>
<svg style="left:1152px;top:78px" width="16" height="16" viewBox="0 0 16 16" ><path d="M1 14 L6 4 L10 8 L13 14 Z" fill="none" stroke="#999999"/><path d="M11 2 L11 8 M9 4 L11 2 L13 4" fill="none" stroke="#999999"/></svg>
<svg style="left:1173px;top:78px" width="16" height="16" viewBox="0 0 16 16" ><path d="M1 14 L12 3 M5 14 L15 4" stroke="#999999"/><path d="M11 5 L13 8 L14 5" fill="none" stroke="#999999"/></svg>
<svg style="left:1200px;top:78px" width="16" height="16" viewBox="0 0 16 16" ><path d="M7 1 L1 8 L7 15 M14 1 L8 8 L14 15" fill="none" stroke="#999999"/></svg>
<svg style="left:1223px;top:78px" width="16" height="16" viewBox="0 0 16 16" ><path d="M6 1 V6 H1 M10 1 V6 H15 M6 15 V10 H1 M10 15 V10 H15" fill="none" stroke="#999999"/></svg>
<svg style="left:1250px;top:78px" width="16" height="16" viewBox="0 0 16 16" ><path d="M2 4 Q6 1 9 5 V10 M5 8 V15 M11 8 V15 L14 11 M11 4 L15 2" fill="none" stroke="#999999"/></svg>
<svg style="left:1273px;top:78px" width="16" height="16" viewBox="0 0 16 16" ><path d="M8 1 L15 8 L8 15 L1 8 Z" fill="#fff" stroke="#999999"/><circle cx="8" cy="8" r="4" fill="#cccccc" stroke="#999999"/><path d="M6 3 V13 M10 3 V13" stroke="#999999"/></svg>
<div class="a" style="left:1101px;top:77px;width:1px;height:18px;background:#c8c8c8;box-shadow:1px 0 0 #fff"></div>
<div class="a" style="left:1195px;top:77px;width:1px;height:18px;background:#c8c8c8;box-shadow:1px 0 0 #fff"></div>
<div class="a" style="left:1244px;top:77px;width:1px;height:18px;background:#c8c8c8;box-shadow:1px 0 0 #fff"></div>
<div class="a" style="left:3px;top:99px;width:826px;height:25px;background:linear-gradient(#fdfdfd,#f6f6f6 55%,#ebebeb);border-radius:3px"></div>
<div class="a" style="left:6px;top:104px;width:2px;height:2px;background:#b0b0b0"></div>
<div class="a" style="left:6px;top:108px;width:2px;height:2px;background:#b0b0b0"></div>
<div class="a" style="left:6px;top:112px;width:2px;height:2px;background:#b0b0b0"></div>
<div class="a" style="left:6px;top:116px;width:2px;height:2px;background:#b0b0b0"></div>
<div class="a" style="left:818px;top:99px;width:11px;height:25px;background:linear-gradient(#c9c9c9,#a2a2a2);border-radius:0 3px 3px 0"></div>
<svg style="left:820px;top:113px" width="7" height="8" viewBox="0 0 7 8" ><path d="M0.5 0.5 H6.5" stroke="#000"/><path d="M0 3 H7 L3.5 7 Z" fill="#000"/><path d="M1 7.5 L3.5 7.5" stroke="#fff" stroke-width="0"/></svg>
<div class="a" style="left:12px;top:100px;width:98px;height:23px;background:#fff"></div>
<div class="a" style="left:96px;top:100px;width:13px;height:23px;background:linear-gradient(#fff,#eee)"></div>
<div class="t" style="left:16px;top:106px;font-size:12px;color:#111;width:80px;overflow:hidden">Normal Viewpo</div>
<svg style="left:99px;top:110px" width="8" height="5" viewBox="0 0 8 5" ><path d="M0 0.5 H8 L4 4.5 Z" fill="#000"/></svg>
<div class="a" style="left:111px;top:100px;width:98px;height:23px;background:#fff"></div>
<svg style="left:115px;top:106px" width="14" height="10" viewBox="0 0 14 10" ><path d="M0.5 6 Q6 -1 13.5 4 Q8 11 0.5 6 Z" fill="#dfe6f0" stroke="#223" stroke-width="1"/><circle cx="7.3" cy="5" r="3" fill="#1c2e5e"/><circle cx="6.3" cy="4" r="0.9" fill="#fff"/><path d="M0.5 6 Q6 -2 13.8 4" fill="none" stroke="#111" stroke-width="1.7"/></svg>
<svg style="left:132px;top:104px" width="12" height="14" viewBox="0 0 12 14" ><circle cx="5" cy="9.5" r="4" fill="#e0e0e0" stroke="#d0d0d0"/><path d="M6.5 6 V1 H10" fill="none" stroke="#d4d4d4" stroke-width="1.2"/></svg>
<div class="a" style="left:196px;top:100px;width:13px;height:23px;background:linear-gradient(#fff,#eee)"></div>
<div class="t" style="left:150px;top:106px;font-size:12px;color:#111">0</div>
<svg style="left:199px;top:110px" width="8" height="5" viewBox="0 0 8 5" ><path d="M0 0.5 H8 L4 4.5 Z" fill="#000"/></svg>
<div class="a" style="left:213px;top:102px;width:80px;height:18px;background:#000"></div>
<div class="t" style="left:239px;top:106px;font-size:12px;color:#fff">Black</div>
<svg style="left:298px;top:110px" width="8" height="5" viewBox="0 0 8 5" ><path d="M0 0.5 H8 L4 4.5 Z" fill="#000"/></svg>
<div class="a" style="left:311px;top:100px;width:98px;height:23px;background:#fff"></div>
<div class="a" style="left:395px;top:100px;width:13px;height:23px;background:linear-gradient(#fff,#eee)"></div>
<div class="a" style="left:315px;top:110px;width:76px;height:1px;background:#000"></div>
<svg style="left:398px;top:110px" width="8" height="5" viewBox="0 0 8 5" ><path d="M0 0.5 H8 L4 4.5 Z" fill="#000"/></svg>
<div class="a" style="left:411px;top:100px;width:99px;height:22px;background:#f2f2f2;border:1px solid #c4c4c4"></div>
<svg style="left:498px;top:110px" width="8" height="5" viewBox="0 0 8 5" ><path d="M0 0.5 H8 L4 4.5 Z" fill="#b8b8b8"/></svg>
<div class="a" style="left:510px;top:100px;width:98px;height:23px;background:#fff"></div>
<div class="a" style="left:594px;top:100px;width:14px;height:23px;background:linear-gradient(#fff,#eee)"></div>
<div class="t" style="left:514px;top:106px;font-size:12px;color:#111">0 mm</div>
<svg style="left:598px;top:110px" width="8" height="5" viewBox="0 0 8 5" ><path d="M0 0.5 H8 L4 4.5 Z" fill="#000"/></svg>
<div class="a" style="left:613px;top:103px;width:1px;height:17px;background:#c8c8c8;box-shadow:1px 0 0 #fff"></div>
<div class="a" style="left:617px;top:100px;width:99px;height:22px;background:#f2f2f2;border:1px solid #c4c4c4"></div>
<svg style="left:704px;top:110px" width="8" height="5" viewBox="0 0 8 5" ><path d="M0 0.5 H8 L4 4.5 Z" fill="#b8b8b8"/></svg>
<div class="a" style="left:717px;top:100px;width:99px;height:22px;background:#f2f2f2;border:1px solid #c4c4c4"></div>
<svg style="left:804px;top:110px" width="8" height="5" viewBox="0 0 8 5" ><path d="M0 0.5 H8 L4 4.5 Z" fill="#b8b8b8"/></svg>
<div class="a" style="left:832px;top:99px;width:196px;height:25px;background:linear-gradient(#fdfdfd,#f6f6f6 55%,#ebebeb);border-radius:3px"></div>
<div class="a" style="left:835px;top:104px;width:2px;height:2px;background:#b0b0b0"></div>
<div class="a" style="left:835px;top:108px;width:2px;height:2px;background:#b0b0b0"></div>
<div class="a" style="left:835px;top:112px;width:2px;height:2px;background:#b0b0b0"></div>
<div class="a" style="left:835px;top:116px;width:2px;height:2px;background:#b0b0b0"></div>
<div class="a" style="left:1017px;top:99px;width:11px;height:25px;background:linear-gradient(#c9c9c9,#a2a2a2);border-radius:0 3px 3px 0"></div>
<svg style="left:1019px;top:113px" width="7" height="8" viewBox="0 0 7 8" ><path d="M0.5 0.5 H6.5" stroke="#000"/><path d="M0 3 H7 L3.5 7 Z" fill="#000"/><path d="M1 7.5 L3.5 7.5" stroke="#fff" stroke-width="0"/></svg>
<svg style="left:842px;top:104px" width="16" height="16" viewBox="0 0 16 16" ><path d="M1 15 L15 1" stroke="#333" stroke-dasharray="2 1.5"/><rect x="3.5" y="9.5" width="3" height="3" fill="#fff" stroke="#00008b" stroke-width="1"/><rect x="9.5" y="3.5" width="3" height="3" fill="#fff" stroke="#00008b" stroke-width="1"/></svg>
<svg style="left:864px;top:104px" width="16" height="16" viewBox="0 0 16 16" ><path d="M0 8.5 H16" stroke="#555" stroke-dasharray="2 2"/><rect x="6.5" y="6.5" width="3" height="3" fill="#fff" stroke="#00008b" stroke-width="1"/></svg>
<svg style="left:886px;top:104px" width="16" height="16" viewBox="0 0 16 16" ><path d="M7.5 0 V16" stroke="#555" stroke-dasharray="2 2"/><rect x="6.0" y="6.5" width="3" height="3" fill="#fff" stroke="#00008b" stroke-width="1"/></svg>
<svg style="left:908px;top:104px" width="16" height="16" viewBox="0 0 16 16" ><path d="M1 10 L8 3 M6 15 L14 7" stroke="#333" stroke-dasharray="2 1.5"/><rect x="3.5" y="4.5" width="3" height="3" fill="#fff" stroke="#00008b" stroke-width="1"/><rect x="7.5" y="9.5" width="3" height="3" fill="#fff" stroke="#00008b" stroke-width="1"/></svg>
<svg style="left:930px;top:104px" width="16" height="16" viewBox="0 0 16 16" ><path d="M1 15 L8 8 L14 2 M8 8 L13 13" stroke="#000" stroke-dasharray="2 1"/><rect x="6.5" y="6.5" width="3" height="3" fill="#fff" stroke="#00008b" stroke-width="1"/><rect x="12.5" y="12.5" width="3" height="3" fill="#fff" stroke="#00008b" stroke-width="1"/></svg>
<svg style="left:952px;top:104px" width="16" height="16" viewBox="0 0 16 16" ><circle cx="8" cy="8" r="7" fill="none" stroke="#444" stroke-dasharray="2 1.5"/><rect x="4.5" y="6.5" width="3" height="3" fill="#fff" stroke="#00008b" stroke-width="1"/><rect x="10.5" y="6.5" width="3" height="3" fill="#fff" stroke="#00008b" stroke-width="1"/></svg>
<svg style="left:974px;top:104px" width="16" height="16" viewBox="0 0 16 16" ><circle cx="8" cy="8" r="7" fill="none" stroke="#444" stroke-dasharray="2 1.5"/><rect x="0.5" y="6.5" width="3" height="3" fill="#fff" stroke="#00008b" stroke-width="1"/><rect x="12.5" y="6.5" width="3" height="3" fill="#fff" stroke="#00008b" stroke-width="1"/></svg>
<svg style="left:996px;top:104px" width="16" height="16" viewBox="0 0 16 16" ><circle cx="8" cy="8" r="7" fill="none" stroke="#444" stroke-dasharray="2 1.5"/><rect x="1.5" y="1.5" width="3" height="3" fill="#fff" stroke="#00008b" stroke-width="1"/><rect x="11.5" y="1.5" width="3" height="3" fill="#fff" stroke="#00008b" stroke-width="1"/><rect x="6.5" y="12.5" width="3" height="3" fill="#fff" stroke="#00008b" stroke-width="1"/></svg>
<div class="a" style="left:26px;top:125px;width:1061px;height:1px;background:#9a9a9a"></div>
<div class="a" style="left:26px;top:125px;width:1px;height:515px;background:#9a9a9a"></div>
<div class="a" style="left:27px;top:126px;width:1060px;height:15px;background:#f0f0f0"></div>
<div class="a" style="left:27px;top:126px;width:15px;height:514px;background:#f0f0f0"></div>
<div class="a" style="left:28px;top:127px;width:13px;height:13px;background:#b8b8b8"></div>
<div class="a" style="left:31px;top:128px;width:9px;height:11px;background:#fff;border-right:1px solid #000;border-bottom:1px solid #000"></div>
<svg style="left:42px;top:126px" width="1045" height="15" viewBox="0 0 1045 15" ><path d="M5.5 11 V14" stroke="#000"/><path d="M16.5 2 V14" stroke="#000"/><path d="M27.5 11 V14" stroke="#000"/><path d="M38.5 11 V14" stroke="#000"/><path d="M49.5 11 V14" stroke="#000"/><path d="M60.5 11 V14" stroke="#000"/><path d="M71.5 9 V14" stroke="#000"/><path d="M82.5 11 V14" stroke="#000"/><path d="M93.5 11 V14" stroke="#000"/><path d="M104.5 11 V14" stroke="#000"/><path d="M116.5 11 V14" stroke="#000"/><path d="M127.5 2 V14" stroke="#000"/><path d="M138.5 11 V14" stroke="#000"/><path d="M149.5 11 V14" stroke="#000"/><path d="M160.5 11 V14" stroke="#000"/><path d="M171.5 11 V14" stroke="#000"/><path d="M182.5 9 V14" stroke="#000"/><path d="M193.5 11 V14" stroke="#000"/><path d="M204.5 11 V14" stroke="#000"/><path d="M215.5 11 V14" stroke="#000"/><path d="M226.5 11 V14" stroke="#000"/><path d="M237.5 2 V14" stroke="#000"/><path d="M248.5 11 V14" stroke="#000"/><path d="M259.5 11 V14" stroke="#000"/><path d="M270.5 11 V14" stroke="#000"/><path d="M281.5 11 V14" stroke="#000"/><path d="M292.5 9 V14" stroke="#000"/><path d="M303.5 11 V14" stroke="#000"/><path d="M315.5 11 V14" stroke="#000"/><path d="M326.5 11 V14" stroke="#000"/><path d="M337.5 11 V14" stroke="#000"/><path d="M348.5 2 V14" stroke="#000"/><path d="M359.5 11 V14" stroke="#000"/><path d="M370.5 11 V14" stroke="#000"/><path d="M381.5 11 V14" stroke="#000"/><path d="M392.5 11 V14" stroke="#000"/><path d="M403.5 9 V14" stroke="#000"/><path d="M414.5 11 V14" stroke="#000"/><path d="M425.5 11 V14" stroke="#000"/><path d="M436.5 11 V14" stroke="#000"/><path d="M447.5 11 V14" stroke="#000"/><path d="M458.5 2 V14" stroke="#000"/><path d="M469.5 11 V14" stroke="#000"/><path d="M480.5 11 V14" stroke="#000"/><path d="M491.5 11 V14" stroke="#000"/><path d="M502.5 11 V14" stroke="#000"/><path d="M514.5 9 V14" stroke="#000"/><path d="M525.5 11 V14" stroke="#000"/><path d="M536.5 11 V14" stroke="#000"/><path d="M547.5 11 V14" stroke="#000"/><path d="M558.5 11 V14" stroke="#000"/><path d="M569.5 2 V14" stroke="#000"/><path d="M580.5 11 V14" stroke="#000"/><path d="M591.5 11 V14" stroke="#000"/><path d="M602.5 11 V14" stroke="#000"/><path d="M613.5 11 V14" stroke="#000"/><path d="M624.5 9 V14" stroke="#000"/><path d="M635.5 11 V14" stroke="#000"/><path d="M646.5 11 V14" stroke="#000"/><path d="M657.5 11 V14" stroke="#000"/><path d="M668.5 11 V14" stroke="#000"/><path d="M679.5 2 V14" stroke="#000"/><path d="M690.5 11 V14" stroke="#000"/><path d="M701.5 11 V14" stroke="#000"/><path d="M713.5 11 V14" stroke="#000"/><path d="M724.5 11 V14" stroke="#000"/><path d="M735.5 9 V14" stroke="#000"/><path d="M746.5 11 V14" stroke="#000"/><path d="M757.5 11 V14" stroke="#000"/><path d="M768.5 11 V14" stroke="#000"/><path d="M779.5 11 V14" stroke="#000"/><path d="M790.5 2 V14" stroke="#000"/><path d="M801.5 11 V14" stroke="#000"/><path d="M812.5 11 V14" stroke="#000"/><path d="M823.5 11 V14" stroke="#000"/><path d="M834.5 11 V14" stroke="#000"/><path d="M845.5 9 V14" stroke="#000"/><path d="M856.5 11 V14" stroke="#000"/><path d="M867.5 11 V14" stroke="#000"/><path d="M878.5 11 V14" stroke="#000"/><path d="M889.5 11 V14" stroke="#000"/><path d="M900.5 2 V14" stroke="#000"/><path d="M912.5 11 V14" stroke="#000"/><path d="M923.5 11 V14" stroke="#000"/><path d="M934.5 11 V14" stroke="#000"/><path d="M945.5 11 V14" stroke="#000"/><path d="M956.5 9 V14" stroke="#000"/><path d="M967.5 11 V14" stroke="#000"/><path d="M978.5 11 V14" stroke="#000"/><path d="M989.5 11 V14" stroke="#000"/><path d="M1000.5 11 V14" stroke="#000"/><path d="M1011.5 2 V14" stroke="#000"/><path d="M1022.5 11 V14" stroke="#000"/></svg>
<div class="t" style="left:59px;top:128px;font-size:9.5px;color:#000">-300 mm</div>
<div class="t" style="left:170px;top:128px;font-size:9.5px;color:#000">-200 mm</div>
<div class="t" style="left:280px;top:128px;font-size:9.5px;color:#000">-100 mm</div>
<div class="t" style="left:391px;top:128px;font-size:9.5px;color:#000">0 mm</div>
<div class="t" style="left:501px;top:128px;font-size:9.5px;color:#000">100 mm</div>
<div class="t" style="left:612px;top:128px;font-size:9.5px;color:#000">200 mm</div>
<div class="t" style="left:722px;top:128px;font-size:9.5px;color:#000">300 mm</div>
<div class="t" style="left:833px;top:128px;font-size:9.5px;color:#000">400 mm</div>
<div class="t" style="left:943px;top:128px;font-size:9.5px;color:#000">500 mm</div>
<div class="t" style="left:1054px;top:128px;font-size:9.5px;color:#000">600 mm</div>
<div class="a" style="left:677px;top:126px;width:1px;height:14px;background:#e040e0"></div>
<svg style="left:27px;top:126px" width="15" height="514" viewBox="0 0 15 514" ><path d="M12 490.5 H15" stroke="#000"/><path d="M12 479.5 H15" stroke="#000"/><path d="M10 468.5 H15" stroke="#000"/><path d="M12 457.5 H15" stroke="#000"/><path d="M12 445.5 H15" stroke="#000"/><path d="M12 434.5 H15" stroke="#000"/><path d="M12 423.5 H15" stroke="#000"/><path d="M2 412.5 H15" stroke="#000"/><path d="M12 401.5 H15" stroke="#000"/><path d="M12 390.5 H15" stroke="#000"/><path d="M12 379.5 H15" stroke="#000"/><path d="M12 368.5 H15" stroke="#000"/><path d="M10 357.5 H15" stroke="#000"/><path d="M12 346.5 H15" stroke="#000"/><path d="M12 335.5 H15" stroke="#000"/><path d="M12 324.5 H15" stroke="#000"/><path d="M12 313.5 H15" stroke="#000"/><path d="M2 302.5 H15" stroke="#000"/><path d="M12 291.5 H15" stroke="#000"/><path d="M12 280.5 H15" stroke="#000"/><path d="M12 269.5 H15" stroke="#000"/><path d="M12 258.5 H15" stroke="#000"/><path d="M10 246.5 H15" stroke="#000"/><path d="M12 235.5 H15" stroke="#000"/><path d="M12 224.5 H15" stroke="#000"/><path d="M12 213.5 H15" stroke="#000"/><path d="M12 202.5 H15" stroke="#000"/><path d="M2 191.5 H15" stroke="#000"/><path d="M12 180.5 H15" stroke="#000"/><path d="M12 169.5 H15" stroke="#000"/><path d="M12 158.5 H15" stroke="#000"/><path d="M12 147.5 H15" stroke="#000"/><path d="M10 136.5 H15" stroke="#000"/><path d="M12 125.5 H15" stroke="#000"/><path d="M12 114.5 H15" stroke="#000"/><path d="M12 103.5 H15" stroke="#000"/><path d="M12 92.5 H15" stroke="#000"/><path d="M2 81.5 H15" stroke="#000"/><path d="M12 70.5 H15" stroke="#000"/><path d="M12 59.5 H15" stroke="#000"/><path d="M12 47.5 H15" stroke="#000"/><path d="M12 36.5 H15" stroke="#000"/><path d="M10 25.5 H15" stroke="#000"/></svg>
<div class="a" style="left:27px;top:142px;width:15px;height:496px;overflow:hidden">
<div class="t" style="left:2px;top:505px;font-size:9.5px;transform-origin:0 0;transform:rotate(-90deg)">-100 mm</div>
<div class="t" style="left:2px;top:394px;font-size:9.5px;transform-origin:0 0;transform:rotate(-90deg)">0 mm</div>
<div class="t" style="left:2px;top:284px;font-size:9.5px;transform-origin:0 0;transform:rotate(-90deg)">100 mm</div>
<div class="t" style="left:2px;top:173px;font-size:9.5px;transform-origin:0 0;transform:rotate(-90deg)">200 mm</div>
<div class="t" style="left:2px;top:63px;font-size:9.5px;transform-origin:0 0;transform:rotate(-90deg)">300 mm</div>
</div>
<div class="a" style="left:27px;top:491px;width:15px;height:1px;background:#e040e0"></div>
<div class="a" style="left:42px;top:140px;width:1045px;height:2px;background:linear-gradient(#c8b8b8,#7a8a8a)"></div>
<div class="a" style="left:41px;top:140px;width:2px;height:477px;background:linear-gradient(90deg,#c8b8b8,#7a8a8a)"></div>
<div class="a" style="left:43px;top:142px;width:1024px;height:475px;background:#008080"></div>
<svg style="left:43px;top:142px" width="1024" height="475" viewBox="0 0 1024 475" ><rect x="356" y="173" width="330" height="234" fill="#a4a4a4"/><rect x="346" y="163" width="330" height="233" fill="#fff"/><path d="M346.5 163 V396" stroke="#c4c4e6"/><path d="M357.5 163 V396" stroke="#e6e6f5"/><path d="M368.5 163 V396" stroke="#e6e6f5"/><path d="M379.5 163 V396" stroke="#e6e6f5"/><path d="M390.5 163 V396" stroke="#e6e6f5"/><path d="M401.5 163 V396" stroke="#c4c4e6"/><path d="M412.5 163 V396" stroke="#e6e6f5"/><path d="M423.5 163 V396" stroke="#e6e6f5"/><path d="M434.5 163 V396" stroke="#e6e6f5"/><path d="M445.5 163 V396" stroke="#e6e6f5"/><path d="M456.5 163 V396" stroke="#c4c4e6"/><path d="M468.5 163 V396" stroke="#e6e6f5"/><path d="M479.5 163 V396" stroke="#e6e6f5"/><path d="M490.5 163 V396" stroke="#e6e6f5"/><path d="M501.5 163 V396" stroke="#e6e6f5"/><path d="M512.5 163 V396" stroke="#c4c4e6"/><path d="M523.5 163 V396" stroke="#e6e6f5"/><path d="M534.5 163 V396" stroke="#e6e6f5"/><path d="M545.5 163 V396" stroke="#e6e6f5"/><path d="M556.5 163 V396" stroke="#e6e6f5"/><path d="M567.5 163 V396" stroke="#c4c4e6"/><path d="M578.5 163 V396" stroke="#e6e6f5"/><path d="M589.5 163 V396" stroke="#e6e6f5"/><path d="M600.5 163 V396" stroke="#e6e6f5"/><path d="M611.5 163 V396" stroke="#e6e6f5"/><path d="M622.5 163 V396" stroke="#c4c4e6"/><path d="M633.5 163 V396" stroke="#e6e6f5"/><path d="M644.5 163 V396" stroke="#e6e6f5"/><path d="M655.5 163 V396" stroke="#e6e6f5"/><path d="M666.5 163 V396" stroke="#e6e6f5"/><path d="M346 395.5 H676" stroke="#c4c4e6"/><path d="M346 384.5 H676" stroke="#e6e6f5"/><path d="M346 373.5 H676" stroke="#e6e6f5"/><path d="M346 362.5 H676" stroke="#e6e6f5"/><path d="M346 351.5 H676" stroke="#e6e6f5"/><path d="M346 340.5 H676" stroke="#c4c4e6"/><path d="M346 329.5 H676" stroke="#e6e6f5"/><path d="M346 318.5 H676" stroke="#e6e6f5"/><path d="M346 307.5 H676" stroke="#e6e6f5"/><path d="M346 296.5 H676" stroke="#e6e6f5"/><path d="M346 285.5 H676" stroke="#c4c4e6"/><path d="M346 273.5 H676" stroke="#e6e6f5"/><path d="M346 262.5 H676" stroke="#e6e6f5"/><path d="M346 251.5 H676" stroke="#e6e6f5"/><path d="M346 240.5 H676" stroke="#e6e6f5"/><path d="M346 229.5 H676" stroke="#c4c4e6"/><path d="M346 218.5 H676" stroke="#e6e6f5"/><path d="M346 207.5 H676" stroke="#e6e6f5"/><path d="M346 196.5 H676" stroke="#e6e6f5"/><path d="M346 185.5 H676" stroke="#e6e6f5"/><path d="M346 174.5 H676" stroke="#c4c4e6"/><path d="M346 163.5 H676" stroke="#e6e6f5"/><rect x="354.5" y="75.5" width="433" height="313" stroke="#a6c8c8" stroke-dasharray="6 2" fill="none" stroke-opacity="0.7"/><path d="M571.5 75.5 V388.5" stroke="#a6c8c8" stroke-dasharray="6 2" fill="none" stroke-opacity="0.7"/><path d="M667.5 75.5 V163" stroke="#a6c8c8" stroke-dasharray="6 2" fill="none" stroke-opacity="0.7"/><path d="M354.5 163 V388.5 H676" stroke="#707070" stroke-dasharray="6 2" fill="none"/><path d="M571.5 163 V388.5" stroke="#707070" stroke-dasharray="6 2" fill="none"/><path d="M667.5 163 V388.5" stroke="#e07080" stroke-dasharray="6 2" fill="none"/><rect x="358.5" y="171.5" width="276" height="177" fill="none" stroke="#000" stroke-width="1.1"/><path d="M353 166 L363 176 M363 166 L353 176" stroke="#c020c0" stroke-width="2"/></svg>
<div class="a" style="left:1067px;top:142px;width:19px;height:475px;background:#ececec"></div>
<svg style="left:1072px;top:150px" width="7" height="4" viewBox="0 0 7 4" ><path d="M0 4 L3.5 0 L7 4 Z" fill="#404040"/></svg>
<svg style="left:1072px;top:607px" width="7" height="4" viewBox="0 0 7 4" ><path d="M0 0 L3.5 4 L7 0 Z" fill="#404040"/></svg>
<div class="a" style="left:1068px;top:345px;width:15px;height:71px;background:linear-gradient(90deg,#f4f4f4,#dadada);border:1px solid #9a9a9a;border-radius:2px"></div>
<svg style="left:1071px;top:376px" width="9" height="8" viewBox="0 0 9 8" ><path d="M0 1 H9 M0 4 H9 M0 7 H9" stroke="#444" stroke-width="1.2"/></svg>
<div class="a" style="left:42px;top:617px;width:1045px;height:23px;background:#f0f0f0"></div>
<div class="a" style="left:43px;top:617px;width:1024px;height:1px;background:#fff"></div>
<div class="a" style="left:47px;top:619px;width:300px;height:1px;background:#8a8a8a"></div>
<div class="a" style="left:52px;top:620px;width:63px;height:16px;background:#e2e2e2;border:1px solid #cfcfcf;border-top:none;border-radius:0 0 2px 2px"></div>
<div class="t" style="left:73px;top:622px;font-size:12px;color:#858585">Model</div>
<svg style="left:57px;top:621px" width="14" height="14" viewBox="0 0 14 14" ><path d="M1 4.5 L4 1.5 H11 V8.5 L8 11.5 H1 Z M1 4.5 H8 V11.5 M8 4.5 L11 1.5" fill="#fff" stroke="#000" stroke-width="1.3"/><circle cx="9" cy="10" r="4.3" fill="#9a9a9a" stroke="#000"/><circle cx="8" cy="9" r="1.8" fill="#e8e8e8"/></svg>
<div class="a" style="left:118px;top:620px;width:68px;height:16px;background:#e2e2e2;border:1px solid #cfcfcf;border-top:none;border-radius:0 0 2px 2px"></div>
<div class="t" style="left:139px;top:622px;font-size:11px;color:#858585">Paper 1</div>
<svg style="left:123px;top:621px" width="14" height="14" viewBox="0 0 14 14" ><path d="M1.5 1.5 H7.5 L11.5 5.5 V13.5 H1.5 Z" fill="#fff" stroke="#000" stroke-width="1.4"/><path d="M7.5 1.5 V5.5 H11.5" fill="none" stroke="#000"/><text x="3.3" y="12" font-size="7.5" font-weight="bold" font-family="Liberation Sans" fill="#000">1</text></svg>
<div class="a" style="left:260px;top:620px;width:68px;height:16px;background:#e2e2e2;border:1px solid #cfcfcf;border-top:none;border-radius:0 0 2px 2px"></div>
<div class="t" style="left:281px;top:622px;font-size:11px;color:#858585">Paper 2</div>
<svg style="left:265px;top:621px" width="14" height="14" viewBox="0 0 14 14" ><path d="M1.5 1.5 H7.5 L11.5 5.5 V13.5 H1.5 Z" fill="#fff" stroke="#000" stroke-width="1.4"/><path d="M7.5 1.5 V5.5 H11.5" fill="none" stroke="#000"/><text x="3.3" y="12" font-size="7.5" font-weight="bold" font-family="Liberation Sans" fill="#000">3</text></svg>
<div class="a" style="left:189px;top:618px;width:69px;height:20px;background:#fff;border:1px solid #a8a8a8;border-top:none;border-bottom:2px solid #000;border-right:2px solid #111"></div>
<div class="t" style="left:211px;top:623px;font-size:11px;font-weight:bold;color:#000;letter-spacing:-0.2px">Paper 3</div>
<svg style="left:194px;top:621px" width="14" height="14" viewBox="0 0 14 14" ><path d="M1.5 1.5 H7.5 L11.5 5.5 V13.5 H1.5 Z" fill="#fff" stroke="#000" stroke-width="1.4"/><path d="M7.5 1.5 V5.5 H11.5" fill="none" stroke="#000"/><text x="3.3" y="12" font-size="7.5" font-weight="bold" font-family="Liberation Sans" fill="#000">2</text></svg>
<div class="a" style="left:352px;top:619px;width:1px;height:21px;background:#888"></div>
<svg style="left:358px;top:625px" width="5" height="9" viewBox="0 0 5 9" ><path d="M4.5 0 L0 4.5 L4.5 9 Z" fill="#404040"/></svg>
<svg style="left:1054px;top:625px" width="5" height="9" viewBox="0 0 5 9" ><path d="M0 0 L4.5 4.5 L0 9 Z" fill="#404040"/></svg>
<div class="a" style="left:648px;top:622px;width:109px;height:15px;background:linear-gradient(#f6f6f6,#d6d6d6);border:1px solid #9a9a9a;border-radius:2px"></div>
<svg style="left:697px;top:625px" width="9" height="8" viewBox="0 0 9 8" ><path d="M1 0 V8 M4 0 V8 M7 0 V8" stroke="#444" stroke-width="1.2"/></svg>
<div class="a" style="left:1087px;top:125px;width:279px;height:515px;background:#eeeeee"></div>
<div class="a" style="left:1087px;top:125px;width:279px;height:26px;background:linear-gradient(#fbfbfb,#f1f1f1)"></div>
<div class="a" style="left:1095px;top:131px;width:2px;height:2px;background:#b4b4b4"></div>
<div class="a" style="left:1095px;top:135px;width:2px;height:2px;background:#b4b4b4"></div>
<div class="a" style="left:1095px;top:139px;width:2px;height:2px;background:#b4b4b4"></div>
<div class="a" style="left:1095px;top:143px;width:2px;height:2px;background:#b4b4b4"></div>
<div class="t" style="left:1104px;top:132px;font-size:12px;color:#111">Tools</div>
<svg style="left:1333px;top:131px" width="10" height="11" viewBox="0 0 10 11" ><path d="M2 0.5 H8 M3 0.5 V6 H7 V0.5 M1 6.5 H9 M5 6.5 V11" stroke="#000" fill="none" stroke-width="1.2"/><rect x="3" y="0" width="2" height="6" fill="#000"/></svg>
<svg style="left:1350px;top:132px" width="9" height="9" viewBox="0 0 9 9" ><path d="M0.5 0.5 L8.5 8.5 M8.5 0.5 L0.5 8.5" stroke="#000" stroke-width="1.6"/></svg>
<div class="a" style="left:1092px;top:151px;width:200px;height:24px;background:linear-gradient(#fbfbfb,#f3f3f3 60%,#e9e9e9);border-radius:3px"></div>
<svg style="left:1099px;top:156px" width="12" height="14" viewBox="0 0 12 14" ><path d="M1.5 1 V11 L4 8.5 L6.5 13 L8 12 L6 8 H9.5 Z" fill="#fff" stroke="#9a9a9a"/></svg>
<svg style="left:1119px;top:155px" width="16" height="16" viewBox="0 0 16 16" ><path d="M1 13 Q2 6 5 3 M5 3 L8 8 M3 1 L7 5" fill="none" stroke="#9a9a9a"/><path d="M7.5 6 V15 L9.5 13 L11.5 16 L12.5 15 L11 12 H14 Z" fill="#fff" stroke="#9a9a9a"/></svg>
<svg style="left:1141px;top:155px" width="16" height="16" viewBox="0 0 16 16" ><path d="M3 12 Q0 6 5 3 Q9 0 13 3 L11 6 Q8 4 6 6 Q4 9 6 11 Z" fill="#b0b0b0"/><path d="M13 5 Q16 10 12 13 Q8 16 4 14 L6 12 Q10 13 11 10 Z" fill="#c8c8c8"/><path d="M13 2 V13" stroke="#9a9a9a"/></svg>
<div class="a" style="left:1162px;top:155px;width:1px;height:18px;background:#c8c8c8;box-shadow:1px 0 0 #fff"></div>
<div class="a" style="left:1167px;top:153px;width:97px;height:21px;background:#fff"></div>
<div class="a" style="left:1250px;top:153px;width:14px;height:21px;background:linear-gradient(#fff,#eee)"></div>
<div class="t" style="left:1169px;top:158px;font-size:12px;color:#111">Sketch</div>
<svg style="left:1255px;top:162px" width="8" height="5" viewBox="0 0 8 5" ><path d="M0 0.5 H8 L4 4.5 Z" fill="#000"/></svg>
<svg style="left:1269px;top:155px" width="18" height="17" viewBox="0 0 18 17" ><path d="M0.5 9.5 L4.5 5.5 L8.5 7.5 L12.5 10.5 L8 15.5 H0.5 Z" fill="#e80000" stroke="#000"/><path d="M8.5 8 L12.5 10.5 L8 15.5 H6.5 Z" fill="#700000"/><path d="M1 2 L2.5 0.5 L8.5 6.5 L7 8 Z" fill="#fff" stroke="#000"/><path d="M8.5 2.5 H11.5 L13.5 4.5 V9.5 H8.5 Z" fill="#fff" stroke="#000"/><path d="M9.5 5 H12 M9.5 7 H12" stroke="#000"/><path d="M13 16 L17 12 V16 Z" fill="#000"/></svg>
<div class="a" style="left:1090px;top:177px;width:258px;height:440px;background:#dcdfe4"></div>
<div class="a" style="left:1091px;top:179px;width:256px;height:123px;background:#f2f3f7;border-top:1px solid #d4d8de;border-left:1px solid #dde2e8;border-right:1px solid #e2e6ec;box-shadow:inset 0 -2px 0 #fafbfc"></div>
<div class="a" style="left:1091px;top:180px;width:256px;height:25px;background:linear-gradient(90deg,#fdfdfe,#f4f6f9 45%,#e6eaf0)"></div>
<div class="t" style="left:1105px;top:189px;font-size:11.5px;font-weight:bold;color:#2f64a3">Snap Modes</div>
<svg style="left:1326px;top:184px" width="16" height="16" viewBox="0 0 16 16" ><circle cx="8" cy="8" r="7.3" fill="#fdfdfd" stroke="#cfd6df"/><path d="M4.8 8 L8 5 L11.2 8 M4.8 11.5 L8 8.5 L11.2 11.5" fill="none" stroke="#2e6aa8" stroke-width="1.5"/></svg>
<div class="a" style="left:1091px;top:304px;width:256px;height:97px;background:#f2f3f7;border-top:1px solid #d4d8de;border-left:1px solid #dde2e8;border-right:1px solid #e2e6ec;box-shadow:inset 0 -2px 0 #fafbfc"></div>
<div class="a" style="left:1091px;top:305px;width:256px;height:25px;background:linear-gradient(90deg,#fdfdfe,#f4f6f9 45%,#e6eaf0)"></div>
<div class="t" style="left:1105px;top:314px;font-size:11.5px;font-weight:bold;color:#2f64a3">Line</div>
<svg style="left:1326px;top:309px" width="16" height="16" viewBox="0 0 16 16" ><circle cx="8" cy="8" r="7.3" fill="#fdfdfd" stroke="#cfd6df"/><path d="M4.8 8 L8 5 L11.2 8 M4.8 11.5 L8 8.5 L11.2 11.5" fill="none" stroke="#2e6aa8" stroke-width="1.5"/></svg>
<div class="a" style="left:1091px;top:402px;width:256px;height:98px;background:#f2f3f7;border-top:1px solid #d4d8de;border-left:1px solid #dde2e8;border-right:1px solid #e2e6ec;box-shadow:inset 0 -2px 0 #fafbfc"></div>
<div class="a" style="left:1091px;top:403px;width:256px;height:25px;background:linear-gradient(90deg,#fdfdfe,#f4f6f9 45%,#e6eaf0)"></div>
<div class="t" style="left:1105px;top:412px;font-size:11.5px;font-weight:bold;color:#2f64a3">Circle/Ellipse</div>
<svg style="left:1326px;top:407px" width="16" height="16" viewBox="0 0 16 16" ><circle cx="8" cy="8" r="7.3" fill="#fdfdfd" stroke="#cfd6df"/><path d="M4.8 8 L8 5 L11.2 8 M4.8 11.5 L8 8.5 L11.2 11.5" fill="none" stroke="#2e6aa8" stroke-width="1.5"/></svg>
<div class="a" style="left:1091px;top:501px;width:256px;height:97px;background:#f2f3f7;border-top:1px solid #d4d8de;border-left:1px solid #dde2e8;border-right:1px solid #e2e6ec;box-shadow:inset 0 -2px 0 #fafbfc"></div>
<div class="a" style="left:1091px;top:502px;width:256px;height:25px;background:linear-gradient(90deg,#fdfdfe,#f4f6f9 45%,#e6eaf0)"></div>
<div class="t" style="left:1105px;top:511px;font-size:11.5px;font-weight:bold;color:#2f64a3">Arc</div>
<svg style="left:1326px;top:506px" width="16" height="16" viewBox="0 0 16 16" ><circle cx="8" cy="8" r="7.3" fill="#fdfdfd" stroke="#cfd6df"/><path d="M4.8 8 L8 5 L11.2 8 M4.8 11.5 L8 8.5 L11.2 11.5" fill="none" stroke="#2e6aa8" stroke-width="1.5"/></svg>
<div class="a" style="left:1091px;top:599px;width:256px;height:30px;background:#f2f3f7;border-top:1px solid #d4d8de;border-left:1px solid #dde2e8;border-right:1px solid #e2e6ec;box-shadow:inset 0 -2px 0 #fafbfc"></div>
<div class="a" style="left:1091px;top:600px;width:256px;height:25px;background:linear-gradient(90deg,#fdfdfe,#f4f6f9 45%,#e6eaf0)"></div>
<div class="t" style="left:1105px;top:609px;font-size:11.5px;font-weight:bold;color:#2f64a3">Curve</div>
<svg style="left:1326px;top:604px" width="16" height="16" viewBox="0 0 16 16" ><circle cx="8" cy="8" r="7.3" fill="#fdfdfd" stroke="#cfd6df"/><path d="M4.8 8 L8 5 L11.2 8 M4.8 11.5 L8 8.5 L11.2 11.5" fill="none" stroke="#2e6aa8" stroke-width="1.5"/></svg>
<div class="a" style="left:1087px;top:616px;width:279px;height:24px;background:#eeeeee"></div>
<div class="a" style="left:1092px;top:616px;width:274px;height:1px;background:#b0b0b0"></div>
<div class="a" style="left:1131px;top:213px;width:29px;height:28px;background:#dfe8f4;border:1.5px solid #4a90dc"></div>
<div class="a" style="left:1159px;top:213px;width:29px;height:28px;background:#dfe8f4;border:1.5px solid #4a90dc"></div>
<div class="a" style="left:1215px;top:213px;width:29px;height:28px;background:#dfe8f4;border:1.5px solid #4a90dc"></div>
<div class="a" style="left:1243px;top:213px;width:29px;height:28px;background:#dfe8f4;border:1.5px solid #4a90dc"></div>
<div class="a" style="left:1299px;top:213px;width:29px;height:28px;background:#dfe8f4;border:1.5px solid #4a90dc"></div>
<div class="a" style="left:1299px;top:240px;width:29px;height:28px;background:#dfe8f4;border:1.5px solid #4a90dc"></div>
<div class="a" style="left:1103px;top:267px;width:29px;height:28px;background:#dfe8f4;border:1.5px solid #4a90dc"></div>
<div class="a" style="left:1131px;top:267px;width:29px;height:28px;background:#dfe8f4;border:1.5px solid #4a90dc"></div>
<div class="a" style="left:1159px;top:267px;width:29px;height:28px;background:#dfe8f4;border:1.5px solid #4a90dc"></div>
<svg style="left:1108px;top:217px" width="18" height="18" viewBox="0 0 18 18" ><path d="M6 3 H12 M4 6 Q6 2 10 5 L14 9 Q16 13 12 15 Q9 16 7 13 L4 8 Z" stroke="#000" fill="none"/><text x="13" y="5" font-size="6" fill="#d00000">Y</text><text x="0" y="17" font-size="6" fill="#d00000">x</text></svg>
<svg style="left:1136px;top:217px" width="18" height="18" viewBox="0 0 18 18" ><rect x="1.5" y="7.5" width="3" height="3" fill="#fff" stroke="#d00000" stroke-width="1"/><path d="M6 9 H13 M10 6 L13 9 L10 12" stroke="#000" fill="none"/><rect x="13.5" y="7.5" width="3" height="3" fill="#fff" stroke="#d00000" stroke-width="1"/></svg>
<svg style="left:1164px;top:217px" width="18" height="18" viewBox="0 0 18 18" ><path d="M2 14 L8 8 L15 15" stroke="#000" fill="none"/><rect x="6.5" y="6.5" width="3" height="3" fill="#fff" stroke="#d00000" stroke-width="1"/><rect x="11" y="2" width="3" height="3" fill="none" stroke="#000" stroke-dasharray="1 1"/></svg>
<svg style="left:1192px;top:217px" width="18" height="18" viewBox="0 0 18 18" ><path d="M2 16 L16 2" stroke="#000"/><rect x="4.5" y="10.5" width="3" height="3" fill="#fff" stroke="#d00000" stroke-width="1"/><rect x="10.5" y="4.5" width="3" height="3" fill="#fff" stroke="#d00000" stroke-width="1"/></svg>
<svg style="left:1220px;top:217px" width="18" height="18" viewBox="0 0 18 18" ><path d="M3 13 A7 7 0 1 1 15 9" stroke="#000" fill="none" stroke-width="1.2"/><rect x="7.5" y="8.5" width="3" height="3" fill="#fff" stroke="#d00000" stroke-width="1"/></svg>
<svg style="left:1248px;top:217px" width="18" height="18" viewBox="0 0 18 18" ><path d="M2.5 5.5 L5.5 2.5 H15.5 V12.5 L12.5 15.5 H2.5 Z M2.5 5.5 H12.5 V15.5 M12.5 5.5 L15.5 2.5" stroke="#000" fill="none" stroke-width="1.3"/><rect x="6.0" y="8.0" width="4" height="4" fill="#fff" stroke="#d00000" stroke-width="1"/></svg>
<svg style="left:1276px;top:217px" width="18" height="18" viewBox="0 0 18 18" ><circle cx="9" cy="9" r="7" fill="none" stroke="#d00000" stroke-dasharray="3 1"/><path d="M9 6 V12 M6 9 H12" stroke="#000" stroke-dasharray="1 1"/></svg>
<svg style="left:1304px;top:217px" width="18" height="18" viewBox="0 0 18 18" ><path d="M2 2 L16 16 M16 2 L2 16" stroke="#000"/><rect x="7.5" y="7.5" width="3" height="3" fill="#fff" stroke="#d00000" stroke-width="1"/></svg>
<svg style="left:1108px;top:244px" width="18" height="18" viewBox="0 0 18 18" ><rect x="2" y="2" width="1.2" height="1.2" fill="#000"/><rect x="2" y="6" width="1.2" height="1.2" fill="#000"/><rect x="2" y="10" width="1.2" height="1.2" fill="#000"/><rect x="2" y="14" width="1.2" height="1.2" fill="#000"/><rect x="6" y="2" width="1.2" height="1.2" fill="#000"/><rect x="6" y="6" width="1.2" height="1.2" fill="#000"/><rect x="6" y="10" width="1.2" height="1.2" fill="#000"/><rect x="6" y="14" width="1.2" height="1.2" fill="#000"/><rect x="10" y="2" width="1.2" height="1.2" fill="#000"/><rect x="10" y="6" width="1.2" height="1.2" fill="#000"/><rect x="10" y="10" width="1.2" height="1.2" fill="#000"/><rect x="10" y="14" width="1.2" height="1.2" fill="#000"/><rect x="14" y="2" width="1.2" height="1.2" fill="#000"/><rect x="14" y="6" width="1.2" height="1.2" fill="#000"/><rect x="14" y="10" width="1.2" height="1.2" fill="#000"/><rect x="12.5" y="12.5" width="3" height="3" fill="#fff" stroke="#d00000" stroke-width="1"/></svg>
<svg style="left:1136px;top:244px" width="18" height="18" viewBox="0 0 18 18" ><path d="M2 9 L7 4 L11 8 L7 12 Z" stroke="#000" fill="none"/><rect x="5.5" y="6.5" width="3" height="3" fill="#fff" stroke="#d00000" stroke-width="1"/><path d="M8 9 L14 15" stroke="#000"/><rect x="11" y="1" width="3" height="3" fill="none" stroke="#000"/></svg>
<svg style="left:1164px;top:244px" width="18" height="18" viewBox="0 0 18 18" ><path d="M2 14 L5 4 H13 L16 14 Z" stroke="#000" fill="none" stroke-width="1.3"/><rect x="7.5" y="8.5" width="3" height="3" fill="#fff" stroke="#d00000" stroke-width="1"/></svg>
<svg style="left:1192px;top:244px" width="18" height="18" viewBox="0 0 18 18" ><path d="M2 16 L14 4 M8 16 Q8 8 16 6" stroke="#000" fill="none"/><rect x="7.5" y="7.5" width="3" height="3" fill="#fff" stroke="#d00000" stroke-width="1"/></svg>
<svg style="left:1220px;top:244px" width="18" height="18" viewBox="0 0 18 18" ><path d="M2 14 H16 M9 6 V14" stroke="#000" stroke-dasharray="2 1"/><path d="M7 1 L11 5 M11 1 L7 5 M9 1 V6" stroke="#d00000" stroke-width="1.2"/><rect x="7.5" y="12.5" width="3" height="3" fill="#fff" stroke="#d00000" stroke-width="1"/></svg>
<svg style="left:1248px;top:244px" width="18" height="18" viewBox="0 0 18 18" ><path d="M2 9 H16 M9 2 V16" stroke="#000"/><path d="M7 1 L11 5 M11 1 L7 5" stroke="#d00000" stroke-width="1.2"/><rect x="7.5" y="13.5" width="3" height="3" fill="#fff" stroke="#d00000" stroke-width="1"/></svg>
<svg style="left:1276px;top:244px" width="18" height="18" viewBox="0 0 18 18" ><path d="M9 2 V16 M2 9 H16 M4 4 L14 14 M14 4 L4 14" stroke="#777"/><path d="M13 4 L16 2" stroke="#d00000"/></svg>
<svg style="left:1304px;top:244px" width="18" height="18" viewBox="0 0 18 18" ><path d="M2 15 L12 3 L16 15 Z" fill="#c0c0c0" stroke="#555"/><path d="M3 13 L15 8" stroke="#000"/><rect x="7.5" y="9.5" width="3" height="3" fill="#fff" stroke="#d00000" stroke-width="1"/></svg>
<svg style="left:1108px;top:271px" width="18" height="18" viewBox="0 0 18 18" ><path d="M4 12 V7 A5 5 0 0 1 14 7 V12" fill="none" stroke="#000" stroke-width="3.5"/><path d="M2 17 L9 12 L16 17" stroke="#000" fill="none"/><rect x="7.5" y="11.5" width="3" height="3" fill="#fff" stroke="#d00000" stroke-width="1"/></svg>
<svg style="left:1136px;top:271px" width="18" height="18" viewBox="0 0 18 18" ><path d="M3 16 V3 H11 V10 L15 15" fill="none" stroke="#000" stroke-dasharray="1.5 1"/><path d="M3 3 V16" stroke="#000"/><rect x="1.0" y="1.0" width="4" height="4" fill="#fff" stroke="#d00000" stroke-width="1"/><rect x="9.5" y="9.5" width="3" height="3" fill="#fff" stroke="#d00000" stroke-width="1"/></svg>
<svg style="left:1164px;top:271px" width="18" height="18" viewBox="0 0 18 18" ><path d="M2 16 L9 2 L16 16" fill="none" stroke="#000" stroke-dasharray="1.5 1"/><path d="M2 16 L6 9 M16 16 L12 9" stroke="#000"/><rect x="4.5" y="8.5" width="3" height="3" fill="#fff" stroke="#d00000" stroke-width="1"/><rect x="10.5" y="8.5" width="3" height="3" fill="#fff" stroke="#d00000" stroke-width="1"/></svg>
<svg style="left:1108px;top:342px" width="18" height="18" viewBox="0 0 18 18" ><path d="M3 15 L15 3" stroke="#000"/><rect x="2.5" y="14.5" width="2" height="2" fill="#fff" stroke="#00008a" stroke-width="1"/><rect x="14.5" y="2.5" width="2" height="2" fill="#fff" stroke="#00008a" stroke-width="1"/></svg>
<svg style="left:1136px;top:342px" width="18" height="18" viewBox="0 0 18 18" ><path d="M2 9 L7 3 L12 9 L14 14" stroke="#000" fill="none"/><rect x="1.5" y="8.5" width="2" height="2" fill="#fff" stroke="#00008a" stroke-width="1"/><rect x="6.5" y="2.5" width="2" height="2" fill="#fff" stroke="#00008a" stroke-width="1"/><rect x="11.5" y="8.5" width="2" height="2" fill="#fff" stroke="#00008a" stroke-width="1"/><rect x="13.5" y="13.5" width="2" height="2" fill="#fff" stroke="#00008a" stroke-width="1"/></svg>
<svg style="left:1164px;top:342px" width="18" height="18" viewBox="0 0 18 18" ><path d="M5 1.5 H13 L16.5 5 V13 L13 16.5 H5 L1.5 13 V5 Z" stroke="#000" fill="none" stroke-width="1.2"/><rect x="8.5" y="8.5" width="2" height="2" fill="#fff" stroke="#00008a" stroke-width="1"/><rect x="2.5" y="2.5" width="2" height="2" fill="#fff" stroke="#00008a" stroke-width="1"/></svg>
<svg style="left:1192px;top:342px" width="18" height="18" viewBox="0 0 18 18" ><path d="M3 2 L14 9 L8 15 Z" stroke="#000" fill="none" stroke-width="1.2"/><rect x="2.5" y="1.5" width="2" height="2" fill="#fff" stroke="#00008a" stroke-width="1"/><rect x="13.5" y="8.5" width="2" height="2" fill="#fff" stroke="#00008a" stroke-width="1"/><rect x="7.5" y="14.5" width="2" height="2" fill="#fff" stroke="#00008a" stroke-width="1"/></svg>
<svg style="left:1220px;top:342px" width="18" height="18" viewBox="0 0 18 18" ><rect x="2.5" y="2.5" width="13" height="13" stroke="#000" fill="none" stroke-width="1.2"/><rect x="1.5" y="1.5" width="2" height="2" fill="#fff" stroke="#00008a" stroke-width="1"/><rect x="14.5" y="14.5" width="2" height="2" fill="#fff" stroke="#00008a" stroke-width="1"/></svg>
<svg style="left:1248px;top:342px" width="18" height="18" viewBox="0 0 18 18" ><path d="M2 9 L8 2 L15 8 L9 15 Z" stroke="#000" fill="none" stroke-width="1.2"/><rect x="7.5" y="1.5" width="2" height="2" fill="#fff" stroke="#00008a" stroke-width="1"/><rect x="8.5" y="14.5" width="2" height="2" fill="#fff" stroke="#00008a" stroke-width="1"/><text x="12" y="16" font-size="6" fill="#00a">R</text></svg>
<svg style="left:1276px;top:342px" width="18" height="18" viewBox="0 0 18 18" ><path d="M1 11 L9 6 L14 1 M9 6 L15 12" stroke="#000" fill="none"/><rect x="8.5" y="5.5" width="2" height="2" fill="#fff" stroke="#00008a" stroke-width="1"/><rect x="14.5" y="11.5" width="2" height="2" fill="#fff" stroke="#00008a" stroke-width="1"/></svg>
<svg style="left:1304px;top:342px" width="18" height="18" viewBox="0 0 18 18" ><path d="M1 12 L9 5 M6 16 L16 7 M10 4 L15 0 M2 12 L0 14" stroke="#000"/><rect x="8.5" y="5.5" width="2" height="2" fill="#fff" stroke="#00008a" stroke-width="1"/><rect x="10.5" y="10.5" width="2" height="2" fill="#fff" stroke="#00008a" stroke-width="1"/></svg>
<svg style="left:1108px;top:369px" width="18" height="18" viewBox="0 0 18 18" ><circle cx="7" cy="10" r="5.5" stroke="#000" fill="none" stroke-width="1.2"/><path d="M5 2 L16 15" stroke="#000"/><rect x="9.5" y="4.5" width="2" height="2" fill="#fff" stroke="#00008a" stroke-width="1"/></svg>
<svg style="left:1136px;top:369px" width="18" height="18" viewBox="0 0 18 18" ><path d="M1 3 Q10 3 10 16" stroke="#000" fill="none" stroke-width="1.2"/><path d="M5 2 L15 13" stroke="#000"/><rect x="7.5" y="6.5" width="2" height="2" fill="#fff" stroke="#00008a" stroke-width="1"/><rect x="14.5" y="12.5" width="2" height="2" fill="#fff" stroke="#00008a" stroke-width="1"/></svg>
<svg style="left:1164px;top:369px" width="18" height="18" viewBox="0 0 18 18" ><path d="M2 2 Q12 6 2 16" stroke="#000" fill="none" stroke-width="1.2"/><path d="M5 2 L15 13" stroke="#000"/><rect x="7.5" y="6.5" width="2" height="2" fill="#fff" stroke="#00008a" stroke-width="1"/><rect x="14.5" y="12.5" width="2" height="2" fill="#fff" stroke="#00008a" stroke-width="1"/></svg>
<svg style="left:1192px;top:369px" width="18" height="18" viewBox="0 0 18 18" ><path d="M1 2 Q8 2 7 8 M1 8 Q12 8 12 16" stroke="#000" fill="none" stroke-width="1.2"/><rect x="7.5" y="2.5" width="2" height="2" fill="#fff" stroke="#00008a" stroke-width="1"/><rect x="13.5" y="13.5" width="2" height="2" fill="#fff" stroke="#00008a" stroke-width="1"/></svg>
<svg style="left:1220px;top:369px" width="18" height="18" viewBox="0 0 18 18" ><path d="M1 12 Q9 10 9 2 M17 9 Q9 8 8 17" stroke="#000" fill="none" stroke-width="1.2"/><rect x="11.5" y="5.5" width="2" height="2" fill="#fff" stroke="#00008a" stroke-width="1"/><rect x="5.5" y="11.5" width="2" height="2" fill="#fff" stroke="#00008a" stroke-width="1"/></svg>
<svg style="left:1108px;top:440px" width="18" height="18" viewBox="0 0 18 18" ><circle cx="9" cy="9" r="7" stroke="#000" fill="none" stroke-width="1.2"/><rect x="8.5" y="8.5" width="2" height="2" fill="#fff" stroke="#00008a" stroke-width="1"/><rect x="13.5" y="8.5" width="2" height="2" fill="#fff" stroke="#00008a" stroke-width="1"/></svg>
<svg style="left:1136px;top:440px" width="18" height="18" viewBox="0 0 18 18" ><circle cx="8" cy="9" r="7" stroke="#000" fill="none"/><circle cx="8" cy="9" r="4.5" stroke="#000" fill="none"/><rect x="7.5" y="8.5" width="2" height="2" fill="#fff" stroke="#00008a" stroke-width="1"/><rect x="11.5" y="8.5" width="2" height="2" fill="#fff" stroke="#00008a" stroke-width="1"/><rect x="14.5" y="8.5" width="2" height="2" fill="#fff" stroke="#00008a" stroke-width="1"/></svg>
<svg style="left:1164px;top:440px" width="18" height="18" viewBox="0 0 18 18" ><circle cx="9" cy="9" r="7" stroke="#000" fill="none" stroke-width="1.2"/><rect x="1.5" y="8.5" width="2" height="2" fill="#fff" stroke="#00008a" stroke-width="1"/><rect x="15.5" y="8.5" width="2" height="2" fill="#fff" stroke="#00008a" stroke-width="1"/></svg>
<svg style="left:1192px;top:440px" width="18" height="18" viewBox="0 0 18 18" ><circle cx="9" cy="10" r="7" stroke="#000" fill="none" stroke-width="1.2"/><rect x="3.5" y="3.5" width="2" height="2" fill="#fff" stroke="#00008a" stroke-width="1"/><rect x="13.5" y="14.5" width="2" height="2" fill="#fff" stroke="#00008a" stroke-width="1"/><path d="M2 2 L7 1" stroke="#000"/></svg>
<svg style="left:1220px;top:440px" width="18" height="18" viewBox="0 0 18 18" ><path d="M1 1.5 H17" stroke="#000" stroke-width="1.3"/><circle cx="9" cy="9" r="7" stroke="#000" fill="none" stroke-width="1.2"/><path d="M9 2 V16" stroke="#000" stroke-dasharray="1 1"/><rect x="1.5" y="8.5" width="2" height="2" fill="#fff" stroke="#00008a" stroke-width="1"/><rect x="15.5" y="8.5" width="2" height="2" fill="#fff" stroke="#00008a" stroke-width="1"/><rect x="8.5" y="15.5" width="2" height="2" fill="#fff" stroke="#00008a" stroke-width="1"/></svg>
<svg style="left:1248px;top:440px" width="18" height="18" viewBox="0 0 18 18" ><circle cx="9" cy="9" r="7" stroke="#000" fill="none" stroke-width="1.2"/><rect x="2.5" y="3.5" width="2" height="2" fill="#fff" stroke="#00008a" stroke-width="1"/><rect x="14.5" y="3.5" width="2" height="2" fill="#fff" stroke="#00008a" stroke-width="1"/><rect x="8.5" y="15.5" width="2" height="2" fill="#fff" stroke="#00008a" stroke-width="1"/></svg>
<svg style="left:1276px;top:440px" width="18" height="18" viewBox="0 0 18 18" ><circle cx="9" cy="9" r="6.5" stroke="#000" fill="none" stroke-width="1.2"/><path d="M3 1 L4 17 M1 12 L17 14" stroke="#000"/><rect x="3.5" y="9.5" width="2" height="2" fill="#fff" stroke="#00008a" stroke-width="1"/><rect x="12.5" y="2.5" width="2" height="2" fill="#fff" stroke="#00008a" stroke-width="1"/><rect x="12.5" y="13.5" width="2" height="2" fill="#fff" stroke="#00008a" stroke-width="1"/></svg>
<svg style="left:1304px;top:440px" width="18" height="18" viewBox="0 0 18 18" ><path d="M1 17 L17 1" stroke="#000"/><circle cx="10" cy="10" r="4.5" stroke="#000" fill="none" stroke-width="1.2"/><rect x="6.5" y="7.5" width="2" height="2" fill="#fff" stroke="#00008a" stroke-width="1"/><rect x="12.5" y="9.5" width="2" height="2" fill="#fff" stroke="#00008a" stroke-width="1"/><rect x="9.5" y="14.5" width="2" height="2" fill="#fff" stroke="#00008a" stroke-width="1"/></svg>
<svg style="left:1108px;top:467px" width="18" height="18" viewBox="0 0 18 18" ><ellipse cx="9" cy="10" rx="7" ry="4.5" stroke="#000" fill="none" stroke-width="1.2"/><rect x="1.5" y="5.5" width="2" height="2" fill="#fff" stroke="#00008a" stroke-width="1"/><rect x="15.5" y="12.5" width="2" height="2" fill="#fff" stroke="#00008a" stroke-width="1"/></svg>
<svg style="left:1136px;top:467px" width="18" height="18" viewBox="0 0 18 18" ><ellipse cx="9" cy="9" rx="8" ry="4" transform="rotate(-45 9 9)" stroke="#000" fill="none" stroke-width="1.2"/><rect x="3.5" y="13.5" width="2" height="2" fill="#fff" stroke="#00008a" stroke-width="1"/><rect x="13.5" y="3.5" width="2" height="2" fill="#fff" stroke="#00008a" stroke-width="1"/><rect x="6.5" y="10.5" width="2" height="2" fill="#fff" stroke="#00008a" stroke-width="1"/></svg>
<svg style="left:1164px;top:467px" width="18" height="18" viewBox="0 0 18 18" ><text x="3" y="6" font-size="6" fill="#00008b" font-weight="bold">a:b</text><ellipse cx="9" cy="12" rx="7" ry="4.5" stroke="#000" fill="none" stroke-width="1.2"/></svg>
<svg style="left:1108px;top:538px" width="18" height="18" viewBox="0 0 18 18" ><path d="M2 13 A7 7 0 0 1 16 13" stroke="#000" fill="none" stroke-width="1.2"/><path d="M9 13 H16" stroke="#000" stroke-dasharray="1 1"/><rect x="1.5" y="12.5" width="2" height="2" fill="#fff" stroke="#00008a" stroke-width="1"/><rect x="8.5" y="12.5" width="2" height="2" fill="#fff" stroke="#00008a" stroke-width="1"/><rect x="15.5" y="12.5" width="2" height="2" fill="#fff" stroke="#00008a" stroke-width="1"/></svg>
<svg style="left:1136px;top:538px" width="18" height="18" viewBox="0 0 18 18" ><path d="M2 13 A7 7 0 0 1 16 13 M5 13 A4 4 0 0 1 13 13" stroke="#000" fill="none" stroke-width="1.2"/><rect x="8.5" y="12.5" width="2" height="2" fill="#fff" stroke="#00008a" stroke-width="1"/><rect x="12.5" y="12.5" width="2" height="2" fill="#fff" stroke="#00008a" stroke-width="1"/><rect x="15.5" y="12.5" width="2" height="2" fill="#fff" stroke="#00008a" stroke-width="1"/></svg>
<svg style="left:1164px;top:538px" width="18" height="18" viewBox="0 0 18 18" ><path d="M2 8 A7 7 0 0 0 16 8 L16 2" stroke="#000" fill="none" stroke-width="1.2"/><rect x="1.5" y="7.5" width="2" height="2" fill="#fff" stroke="#00008a" stroke-width="1"/><rect x="8.5" y="9.5" width="2" height="2" fill="#fff" stroke="#00008a" stroke-width="1"/><rect x="15.5" y="7.5" width="2" height="2" fill="#fff" stroke="#00008a" stroke-width="1"/></svg>
<svg style="left:1192px;top:538px" width="18" height="18" viewBox="0 0 18 18" ><path d="M3 15 A7 7 0 0 1 16 12" stroke="#000" fill="none" stroke-width="1.2"/><rect x="2.5" y="14.5" width="2" height="2" fill="#fff" stroke="#00008a" stroke-width="1"/><rect x="8.5" y="2.5" width="2" height="2" fill="#fff" stroke="#00008a" stroke-width="1"/><rect x="15.5" y="11.5" width="2" height="2" fill="#fff" stroke="#00008a" stroke-width="1"/></svg>
<svg style="left:1220px;top:538px" width="18" height="18" viewBox="0 0 18 18" ><path d="M2 16 L16 2" stroke="#000"/><path d="M6 12 A5 5 0 0 1 14 11" fill="none" stroke="#000" stroke-dasharray="1 1"/><rect x="9.5" y="9.5" width="2" height="2" fill="#fff" stroke="#00008a" stroke-width="1"/><rect x="12.5" y="13.5" width="2" height="2" fill="#fff" stroke="#00008a" stroke-width="1"/></svg>
<svg style="left:1248px;top:538px" width="18" height="18" viewBox="0 0 18 18" ><path d="M8 2 A7 7 0 0 1 8 16" stroke="#000" fill="none" stroke-width="1.2"/><text x="1" y="7" font-size="6.5" font-weight="bold" fill="#000">1</text><text x="9" y="11" font-size="6.5" font-weight="bold" fill="#000">2</text><text x="1" y="17" font-size="6.5" font-weight="bold" fill="#000">3</text><rect x="7.5" y="1.5" width="2" height="2" fill="#fff" stroke="#00008a" stroke-width="1"/><rect x="13.5" y="8.5" width="2" height="2" fill="#fff" stroke="#00008a" stroke-width="1"/><rect x="7.5" y="15.5" width="2" height="2" fill="#fff" stroke="#00008a" stroke-width="1"/></svg>
<svg style="left:1276px;top:538px" width="18" height="18" viewBox="0 0 18 18" ><path d="M8 2 A7 7 0 0 1 8 16" stroke="#000" fill="none" stroke-width="1.2"/><text x="1" y="7" font-size="6.5" font-weight="bold" fill="#000">1</text><text x="9" y="11" font-size="6.5" font-weight="bold" fill="#000">3</text><text x="1" y="17" font-size="6.5" font-weight="bold" fill="#000">2</text><rect x="7.5" y="1.5" width="2" height="2" fill="#fff" stroke="#00008a" stroke-width="1"/><rect x="13.5" y="8.5" width="2" height="2" fill="#fff" stroke="#00008a" stroke-width="1"/><rect x="7.5" y="15.5" width="2" height="2" fill="#fff" stroke="#00008a" stroke-width="1"/></svg>
<svg style="left:1304px;top:538px" width="18" height="18" viewBox="0 0 18 18" ><path d="M5 4 A6 6 0 1 1 4 12" stroke="#000" fill="none" stroke-width="1.2"/><path d="M1 7 L8 9" stroke="#000"/><rect x="4.5" y="3.5" width="2" height="2" fill="#fff" stroke="#00008a" stroke-width="1"/><rect x="14.5" y="6.5" width="2" height="2" fill="#fff" stroke="#00008a" stroke-width="1"/><rect x="7.5" y="14.5" width="2" height="2" fill="#fff" stroke="#00008a" stroke-width="1"/></svg>
<svg style="left:1108px;top:565px" width="18" height="18" viewBox="0 0 18 18" ><path d="M2 16 L16 2" stroke="#000"/><path d="M5 13 A5 5 0 0 1 14 12" stroke="#000" fill="none"/><rect x="6.5" y="7.5" width="2" height="2" fill="#fff" stroke="#00008a" stroke-width="1"/><rect x="5.5" y="13.5" width="2" height="2" fill="#fff" stroke="#00008a" stroke-width="1"/><rect x="12.5" y="13.5" width="2" height="2" fill="#fff" stroke="#00008a" stroke-width="1"/></svg>
<svg style="left:1136px;top:565px" width="18" height="18" viewBox="0 0 18 18" ><path d="M3 16 L15 2" stroke="#000"/><circle cx="10" cy="11" r="4" stroke="#000" fill="none"/><rect x="9.5" y="7.5" width="2" height="2" fill="#fff" stroke="#00008a" stroke-width="1"/><rect x="5.5" y="14.5" width="2" height="2" fill="#fff" stroke="#00008a" stroke-width="1"/></svg>
<svg style="left:1164px;top:565px" width="18" height="18" viewBox="0 0 18 18" ><ellipse cx="9" cy="10" rx="7" ry="5" stroke="#000" fill="none" stroke-width="1.2" stroke-dasharray="14 4"/><rect x="3.5" y="4.5" width="2" height="2" fill="#fff" stroke="#00008a" stroke-width="1"/><rect x="8.5" y="6.5" width="2" height="2" fill="#fff" stroke="#00008a" stroke-width="1"/><rect x="15.5" y="12.5" width="2" height="2" fill="#fff" stroke="#00008a" stroke-width="1"/></svg>
<svg style="left:1192px;top:565px" width="18" height="18" viewBox="0 0 18 18" ><ellipse cx="9" cy="9" rx="8" ry="4" transform="rotate(-45 9 9)" stroke="#000" fill="none" stroke-width="1.2"/><rect x="3.5" y="13.5" width="2" height="2" fill="#fff" stroke="#00008a" stroke-width="1"/><rect x="13.5" y="3.5" width="2" height="2" fill="#fff" stroke="#00008a" stroke-width="1"/><rect x="8.5" y="8.5" width="2" height="2" fill="#fff" stroke="#00008a" stroke-width="1"/></svg>
<svg style="left:1220px;top:565px" width="18" height="18" viewBox="0 0 18 18" ><text x="3" y="6" font-size="6" fill="#00008b" font-weight="bold">a:b</text><path d="M2 15 A7 5 0 0 1 16 15" stroke="#000" fill="none" stroke-width="1.2"/></svg>
<div class="a" style="left:1348px;top:177px;width:18px;height:440px;background:#eeeeee"></div>
<svg style="left:1354px;top:185px" width="7" height="4" viewBox="0 0 7 4" ><path d="M0 4 L3.5 0 L7 4 Z" fill="#303030"/></svg>
<svg style="left:1355px;top:605px" width="7" height="4" viewBox="0 0 7 4" ><path d="M0 0 L3.5 4 L7 0 Z" fill="#303030"/></svg>
<div class="a" style="left:1351px;top:196px;width:14px;height:217px;background:linear-gradient(90deg,#f6f6f6,#d8d8d8);border:1px solid #a4a4a4;border-radius:2px"></div>
<svg style="left:1354px;top:300px" width="8" height="8" viewBox="0 0 8 8" ><path d="M0 1 H8 M0 4 H8 M0 7 H8" stroke="#444" stroke-width="1.2"/></svg>
<div class="a" style="left:1092px;top:617px;width:57px;height:21px;background:#fbfbfb;border:1px solid #a8a8a8;border-top:none;box-shadow:0 1px 0 #ddd"></div>
<svg style="left:1097px;top:620px" width="16" height="17" viewBox="0 0 16 17" ><path d="M0.5 9.5 L4.5 5.5 L8.5 7.5 L12.5 10.5 L8 15.5 H0.5 Z" fill="#e80000" stroke="#000"/><path d="M8.5 8 L12.5 10.5 L8 15.5 H6.5 Z" fill="#700000"/><path d="M1 2 L2.5 0.5 L8.5 6.5 L7 8 Z" fill="#fff" stroke="#000"/><path d="M8.5 2.5 H11.5 L13.5 4.5 V9.5 H8.5 Z" fill="#fff" stroke="#000"/><path d="M9.5 5 H12 M9.5 7 H12" stroke="#000"/></svg>
<div class="t" style="left:1117px;top:622px;font-size:12px;color:#111">Tools</div>
<div class="a" style="left:1150px;top:618px;width:124px;height:20px;background:#f4f4f4;border:1px solid #b8b8b8;border-top:none"></div>
<svg style="left:1154px;top:619px" width="18" height="18" viewBox="0 0 18 18" ><path d="M2.5 3.5 L11 12" stroke="#0000c0" stroke-width="1.2"/><path d="M0.5 1.5 L5 2.5 L1.5 6 Z M13 14 L8.5 13 L12 9.5 Z" fill="#0000c0"/><path d="M11.5 14 V17" stroke="#0000c0" stroke-dasharray="1 1"/><text x="9" y="11" font-size="12" font-weight="bold" font-family="Liberation Sans" fill="#0000c0">?</text></svg>
<div class="t" style="left:1173px;top:622px;font-size:12px;color:#111">Measurement Info</div>
<div class="a" style="left:0px;top:125px;width:26px;height:515px;background:linear-gradient(90deg,#fdfdfd,#f3f3f3 60%,#e6e6e6);border-radius:0 0 3px 3px"></div>
<div class="a" style="left:5px;top:131px;width:2px;height:2px;background:#b4b4b4"></div>
<div class="a" style="left:9px;top:131px;width:2px;height:2px;background:#b4b4b4"></div>
<div class="a" style="left:13px;top:131px;width:2px;height:2px;background:#b4b4b4"></div>
<div class="a" style="left:17px;top:131px;width:2px;height:2px;background:#b4b4b4"></div>
<svg style="left:5px;top:140px" width="16" height="16" viewBox="0 0 16 16" ><path d="M5.5 1 V11.5 L8 9.3 L10.3 13.8 L11.8 13 L9.6 8.6 H12.8 Z" fill="#fff" stroke="#a0a0a0" stroke-width="1.1"/></svg>
<svg style="left:18px;top:152px" width="6" height="6" viewBox="0 0 6 6" ><path d="M0 5 L5 0 V5 Z" fill="#f2f078"/><path d="M0 5.4 H5.4 V0" fill="none" stroke="#000" stroke-width="1.2"/></svg>
<svg style="left:5px;top:161px" width="16" height="16" viewBox="0 0 16 16" ><path d="M1 15 L15 1" stroke="#555" stroke-dasharray="2 2"/><rect x="3.5" y="11.5" width="2" height="2" fill="#fff" stroke="#00008a" stroke-width="1"/><rect x="9.5" y="5.5" width="2" height="2" fill="#fff" stroke="#00008a" stroke-width="1"/></svg>
<svg style="left:18px;top:173px" width="6" height="6" viewBox="0 0 6 6" ><path d="M0 5 L5 0 V5 Z" fill="#f2f078"/><path d="M0 5.4 H5.4 V0" fill="none" stroke="#000" stroke-width="1.2"/></svg>
<svg style="left:5px;top:182px" width="16" height="16" viewBox="0 0 16 16" ><circle cx="9" cy="10.5" r="1.7" fill="#000"/></svg>
<svg style="left:18px;top:194px" width="6" height="6" viewBox="0 0 6 6" ><path d="M0 5 L5 0 V5 Z" fill="#f2f078"/><path d="M0 5.4 H5.4 V0" fill="none" stroke="#000" stroke-width="1.2"/></svg>
<svg style="left:5px;top:204px" width="16" height="16" viewBox="0 0 16 16" ><path d="M3 14 L13 4" stroke="#000"/><rect x="2.5" y="13.5" width="2" height="2" fill="#fff" stroke="#00008a" stroke-width="1"/><rect x="12.5" y="3.5" width="2" height="2" fill="#fff" stroke="#00008a" stroke-width="1"/></svg>
<svg style="left:18px;top:216px" width="6" height="6" viewBox="0 0 6 6" ><path d="M0 5 L5 0 V5 Z" fill="#f2f078"/><path d="M0 5.4 H5.4 V0" fill="none" stroke="#000" stroke-width="1.2"/></svg>
<svg style="left:5px;top:227px" width="16" height="16" viewBox="0 0 16 16" ><rect x="1" y="1" width="15" height="15" fill="none" stroke="#000" stroke-width="1.5"/><rect x="5" y="5" width="7" height="7" fill="none" stroke="#000" stroke-width="1.2"/><rect x="1.5" y="1.5" width="2" height="2" fill="#fff" stroke="#00008a" stroke-width="1"/><rect x="13.5" y="13.5" width="2" height="2" fill="#fff" stroke="#00008a" stroke-width="1"/></svg>
<svg style="left:18px;top:239px" width="6" height="6" viewBox="0 0 6 6" ><path d="M0 5 L5 0 V5 Z" fill="#f2f078"/><path d="M0 5.4 H5.4 V0" fill="none" stroke="#000" stroke-width="1.2"/></svg>
<svg style="left:5px;top:249px" width="16" height="16" viewBox="0 0 16 16" ><path d="M1 12 L10 3 M4 15 L13 6" stroke="#000" stroke-dasharray="2 1"/><rect x="2.5" y="12.5" width="2" height="2" fill="#fff" stroke="#00008a" stroke-width="1"/><rect x="12.5" y="2.5" width="2" height="2" fill="#fff" stroke="#00008a" stroke-width="1"/></svg>
<svg style="left:18px;top:261px" width="6" height="6" viewBox="0 0 6 6" ><path d="M0 5 L5 0 V5 Z" fill="#f2f078"/><path d="M0 5.4 H5.4 V0" fill="none" stroke="#000" stroke-width="1.2"/></svg>
<svg style="left:5px;top:271px" width="16" height="16" viewBox="0 0 16 16" ><circle cx="8" cy="9" r="6.5" fill="none" stroke="#000" stroke-width="1.2"/><rect x="7.5" y="8.5" width="2" height="2" fill="#fff" stroke="#00008a" stroke-width="1"/><rect x="13.5" y="8.5" width="2" height="2" fill="#fff" stroke="#00008a" stroke-width="1"/></svg>
<svg style="left:18px;top:283px" width="6" height="6" viewBox="0 0 6 6" ><path d="M0 5 L5 0 V5 Z" fill="#f2f078"/><path d="M0 5.4 H5.4 V0" fill="none" stroke="#000" stroke-width="1.2"/></svg>
<svg style="left:5px;top:293px" width="16" height="16" viewBox="0 0 16 16" ><path d="M1.5 12 A6.5 6.5 0 0 1 14.5 11" fill="none" stroke="#000" stroke-width="1.2"/><path d="M8 11 H14" stroke="#000"/><rect x="0.5" y="12.5" width="2" height="2" fill="#fff" stroke="#00008a" stroke-width="1"/><rect x="7.5" y="10.5" width="2" height="2" fill="#fff" stroke="#00008a" stroke-width="1"/><rect x="13.5" y="10.5" width="2" height="2" fill="#fff" stroke="#00008a" stroke-width="1"/></svg>
<svg style="left:18px;top:305px" width="6" height="6" viewBox="0 0 6 6" ><path d="M0 5 L5 0 V5 Z" fill="#f2f078"/><path d="M0 5.4 H5.4 V0" fill="none" stroke="#000" stroke-width="1.2"/></svg>
<svg style="left:5px;top:316px" width="16" height="16" viewBox="0 0 16 16" ><path d="M1 14 Q8 -2 15 14" fill="none" stroke="#000" stroke-width="1.2"/><rect x="0.5" y="13.5" width="2" height="2" fill="#fff" stroke="#00008a" stroke-width="1"/><rect x="14.5" y="13.5" width="2" height="2" fill="#fff" stroke="#00008a" stroke-width="1"/><rect x="3.5" y="1.5" width="2" height="2" fill="#fff" stroke="#00008a" stroke-width="1"/><rect x="11.5" y="1.5" width="2" height="2" fill="#fff" stroke="#00008a" stroke-width="1"/></svg>
<svg style="left:18px;top:328px" width="6" height="6" viewBox="0 0 6 6" ><path d="M0 5 L5 0 V5 Z" fill="#f2f078"/><path d="M0 5.4 H5.4 V0" fill="none" stroke="#000" stroke-width="1.2"/></svg>
<svg style="left:5px;top:338px" width="16" height="16" viewBox="0 0 16 16" ><path d="M1.5 5.5 L5.5 1.5 H14.5 V10.5 L10.5 14.5 H1.5 Z M1.5 5.5 H10.5 V14.5 M10.5 5.5 L14.5 1.5" fill="#fff" stroke="#a0a0a0"/></svg>
<svg style="left:18px;top:350px" width="6" height="6" viewBox="0 0 6 6" ><path d="M0 5 L5 0 V5 Z" fill="#f2f078"/><path d="M0 5.4 H5.4 V0" fill="none" stroke="#000" stroke-width="1.2"/></svg>
<svg style="left:5px;top:360px" width="16" height="16" viewBox="0 0 16 16" ><path d="M2 5 L9 1 H14 V11 L9 15 H2 Z" fill="#808080" stroke="#000"/><path d="M9 1 V5 M2 5 H9" stroke="#000"/><rect x="2.5" y="13.5" width="2" height="2" fill="#fff" stroke="#00008a" stroke-width="1"/><rect x="12.5" y="12.5" width="2" height="2" fill="#fff" stroke="#00008a" stroke-width="1"/></svg>
<svg style="left:18px;top:372px" width="6" height="6" viewBox="0 0 6 6" ><path d="M0 5 L5 0 V5 Z" fill="#f2f078"/><path d="M0 5.4 H5.4 V0" fill="none" stroke="#000" stroke-width="1.2"/></svg>
<div class="a" style="left:4px;top:382px;width:18px;height:1px;background:#808080"></div>
<svg style="left:5px;top:384px" width="16" height="16" viewBox="0 0 16 16" ><path d="M8 0 V11 M2.5 5.5 H13.5 M6 2 L8 0 L10 2 M6 9 L8 11 L10 9 M4.5 3.5 L2.5 5.5 L4.5 7.5 M11.5 3.5 L13.5 5.5 L11.5 7.5" fill="none" stroke="#000" stroke-width="1.2"/></svg>
<svg style="left:18px;top:396px" width="6" height="6" viewBox="0 0 6 6" ><path d="M0 5 L5 0 V5 Z" fill="#f2f078"/><path d="M0 5.4 H5.4 V0" fill="none" stroke="#000" stroke-width="1.2"/></svg>
<div class="a" style="left:4px;top:396px;width:18px;height:1px;background:#808080"></div>
<svg style="left:5px;top:403px" width="16" height="16" viewBox="0 0 16 16" ><text x="0" y="15.5" font-size="19" font-weight="bold" font-family="Liberation Sans" fill="#000">A</text></svg>
<svg style="left:18px;top:415px" width="6" height="6" viewBox="0 0 6 6" ><path d="M0 5 L5 0 V5 Z" fill="#f2f078"/><path d="M0 5.4 H5.4 V0" fill="none" stroke="#000" stroke-width="1.2"/></svg>
<svg style="left:5px;top:427px" width="16" height="16" viewBox="0 0 16 16" ><rect x="1.5" y="1.5" width="8" height="8" fill="#fff" stroke="#000"/><path d="M2 2 L9 9" stroke="#d00"/><rect x="5" y="5" width="11" height="11" fill="#0000e0" stroke="#000"/><path d="M5 5 H9 V9 H5 Z" fill="#d00000"/></svg>
<svg style="left:18px;top:439px" width="6" height="6" viewBox="0 0 6 6" ><path d="M0 5 L5 0 V5 Z" fill="#f2f078"/><path d="M0 5.4 H5.4 V0" fill="none" stroke="#000" stroke-width="1.2"/></svg>
<svg style="left:5px;top:448px" width="16" height="16" viewBox="0 0 16 16" ><circle cx="8" cy="8" r="7" fill="#f4f4f4" stroke="#a0a0a0"/><path d="M4 4 L7 7 M12 4 L9 7 M4 12 L7 9 M12 12 L9 9" stroke="#a0a0a0"/></svg>
<svg style="left:18px;top:460px" width="6" height="6" viewBox="0 0 6 6" ><path d="M0 5 L5 0 V5 Z" fill="#f2f078"/><path d="M0 5.4 H5.4 V0" fill="none" stroke="#000" stroke-width="1.2"/></svg>
<svg style="left:5px;top:470px" width="16" height="16" viewBox="0 0 16 16" ><rect x="1" y="3" width="8" height="5" fill="#d0d0d0" stroke="#a0a0a0"/><path d="M9 14 L15 8 M12 8 H15 V11" fill="none" stroke="#a0a0a0"/><rect x="2" y="12" width="2" height="2" fill="#a0a0a0"/></svg>
<svg style="left:18px;top:482px" width="6" height="6" viewBox="0 0 6 6" ><path d="M0 5 L5 0 V5 Z" fill="#f2f078"/><path d="M0 5.4 H5.4 V0" fill="none" stroke="#000" stroke-width="1.2"/></svg>
<div class="a" style="left:4px;top:490px;width:18px;height:1px;background:#b8b8b8"></div>
<svg style="left:5px;top:497px" width="16" height="16" viewBox="0 0 16 16" ><path d="M2 14 L9 7 M6 15 L15 6 M1 9 L7 3 M3 14 L1 11" stroke="#a0a0a0" fill="none"/></svg>
<svg style="left:18px;top:509px" width="6" height="6" viewBox="0 0 6 6" ><path d="M0 5 L5 0 V5 Z" fill="#f2f078"/><path d="M0 5.4 H5.4 V0" fill="none" stroke="#000" stroke-width="1.2"/></svg>
<svg style="left:5px;top:519px" width="16" height="16" viewBox="0 0 16 16" ><path d="M1 13 L3 6 Q8 1 13 4 Q16 8 13 12 L9 15 H1 Z" fill="#d0d0d0" stroke="#a0a0a0"/></svg>
<svg style="left:18px;top:531px" width="6" height="6" viewBox="0 0 6 6" ><path d="M0 5 L5 0 V5 Z" fill="#f2f078"/><path d="M0 5.4 H5.4 V0" fill="none" stroke="#000" stroke-width="1.2"/></svg>
<svg style="left:5px;top:540px" width="16" height="16" viewBox="0 0 16 16" ><path d="M1 5 L5 1 L12 8 L8 12 Z" fill="#d0d0d0" stroke="#a0a0a0"/><path d="M3 12 L1 15 M12 12 L15 15" stroke="#a0a0a0" stroke-dasharray="1 1"/></svg>
<svg style="left:18px;top:552px" width="6" height="6" viewBox="0 0 6 6" ><path d="M0 5 L5 0 V5 Z" fill="#f2f078"/><path d="M0 5.4 H5.4 V0" fill="none" stroke="#000" stroke-width="1.2"/></svg>
<svg style="left:5px;top:563px" width="16" height="16" viewBox="0 0 16 16" ><path d="M1.5 8.5 L5 5.5 H11 V13 L8 15.5 H1.5 Z M1.5 8.5 H8 V15.5 M8 8.5 L11 5.5" fill="#fff" stroke="#a0a0a0"/><path d="M9 3 H15 V0 M12 3 L13 6" fill="none" stroke="#a0a0a0"/></svg>
<div class="a" style="left:4px;top:585px;width:18px;height:1px;background:#b8b8b8"></div>
<svg style="left:5px;top:592px" width="16" height="16" viewBox="0 0 16 16" ><rect x="3" y="3" width="11" height="11" fill="none" stroke="#a0a0a0"/><rect x="1" y="1" width="4" height="4" fill="#a0a0a0"/><rect x="12" y="1" width="4" height="4" fill="#a0a0a0"/><rect x="1" y="12" width="4" height="4" fill="#a0a0a0"/><rect x="12" y="12" width="4" height="4" fill="#a0a0a0"/><rect x="6.5" y="1" width="4" height="4" fill="#a0a0a0"/></svg>
<div class="a" style="left:0px;top:624px;width:26px;height:16px;background:linear-gradient(#c8c8c8,#a0a0a0);border-radius:0 0 3px 3px"></div>
<svg style="left:3px;top:628px" width="20" height="9" viewBox="0 0 20 9" ><path d="M2 2.5 L4 0.5 L6 2.5 M2 6.5 L4 8.5 L6 6.5" fill="none" stroke="#000" stroke-width="1.1"/><path d="M13.5 1 V8" stroke="#000" stroke-width="1.3"/><path d="M15 1 L19 4.5 L15 8 Z" fill="#000"/></svg>
<div class="a" style="left:0px;top:640px;width:1366px;height:41px;background:#f0f0f0"></div>
<svg style="left:8px;top:649px" width="16" height="16" viewBox="0 0 16 16" ><path d="M2.5 3 L13.5 13.5 M13.5 3 L2.5 13.5" stroke="#e00000" stroke-width="3"/><path d="M4 12.5 L7 9.5 M10 10 L13 13" stroke="#900" stroke-width="1"/></svg>
<svg style="left:34px;top:650px" width="15" height="14" viewBox="0 0 15 14" ><rect x="0.5" y="0.5" width="14" height="12" fill="#fff" stroke="#00006a"/><rect x="0.5" y="0.5" width="14" height="2.5" fill="#00006a"/><path d="M2 1.5 H3 M7 1.5 H8 M12 1.5 H13" stroke="#fff"/><path d="M2 5.5 H5 M6 5.5 H9 M10 5.5 H13 M2 8 H5 M6 8 H9 M10 8 H13 M2 10.5 H5 M6 10.5 H9 M10 10.5 H13" stroke="#00006a" stroke-width="1.2"/></svg>
<div class="a" style="left:56px;top:643px;width:1px;height:33px;background:#c4c4c4;box-shadow:1px 0 0 #fff"></div>
<svg style="left:64px;top:647px" width="18" height="18" viewBox="0 0 18 18" ><rect x="0.5" y="0.5" width="10" height="11" fill="#fff" stroke="#000"/><path d="M3 5 L5 3 L7 5" fill="#d00" stroke="#d00"/><path d="M2 9 L5 6 L8 9 Z" fill="#0040c0"/><circle cx="11.5" cy="11.5" r="5.5" fill="#fff" stroke="#000"/><path d="M7.5 14 L11.5 9.5 L15.5 14 Z" fill="#1050d0"/><path d="M10 10 L13 8" stroke="#d00" stroke-width="2"/></svg>
<div class="a" style="left:121px;top:640px;width:1px;height:41px;background:#b8b8b8;box-shadow:1px 0 0 #fff"></div>
<div class="a" style="left:0px;top:681px;width:1366px;height:27px;background:#f0f0f0;border-top:1px solid #b4b4b4"></div>
<div class="t" style="left:10px;top:691px;font-size:12px;color:#111">Define the second corner of the viewport</div>
<div class="t" style="left:887px;top:691px;font-size:12px;color:#111;letter-spacing:-0.8px">SNAP</div>
<div class="t" style="left:925px;top:691px;font-size:12px;color:#111;letter-spacing:-0.5px">GEO</div>
<div class="a" style="left:919px;top:685px;width:1px;height:21px;background:#cfcfcf"></div>
<div class="a" style="left:951px;top:685px;width:1px;height:21px;background:#cfcfcf"></div>
<div class="a" style="left:1249px;top:685px;width:1px;height:21px;background:#cfcfcf"></div>
<div class="a" style="left:1304px;top:685px;width:1px;height:21px;background:#cfcfcf"></div>
<svg style="left:967px;top:687px" width="10" height="19" viewBox="0 0 10 19" ><path d="M1.5 1.5 H8.5 V8.5 H1.5 Z" fill="#fff" stroke="#333"/><path d="M1.5 1.5 H8.5" stroke="#333" stroke-width="2"/><text x="0.5" y="18" font-size="11" fill="#333">X</text></svg>
<div class="a" style="left:978px;top:687px;width:73px;height:19px;background:#fff;border:1px solid #828282"></div>
<div class="t" style="left:981px;top:692px;font-size:10.5px;color:#111">260,34 mm</div>
<svg style="left:1063px;top:687px" width="10" height="19" viewBox="0 0 10 19" ><path d="M1.5 1.5 H8.5 V8.5 H1.5 Z" fill="#fff" stroke="#333"/><path d="M1.5 1.5 H8.5" stroke="#333" stroke-width="2"/><text x="0.5" y="18" font-size="11" fill="#333">Y</text></svg>
<div class="a" style="left:1074px;top:687px;width:73px;height:19px;background:#fff;border:1px solid #828282"></div>
<div class="t" style="left:1077px;top:692px;font-size:10.5px;color:#111">42,19 mm</div>
<svg style="left:1159px;top:687px" width="10" height="19" viewBox="0 0 10 19" ><path d="M1.5 1.5 H8.5 V8.5 H1.5 Z" fill="#fff" stroke="#333"/><path d="M1.5 1.5 H8.5" stroke="#333" stroke-width="2"/><text x="0.5" y="18" font-size="11" fill="#333">Z</text></svg>
<div class="a" style="left:1170px;top:687px;width:73px;height:19px;background:#fff;border:1px solid #828282"></div>
<div class="t" style="left:1173px;top:692px;font-size:10.5px;color:#8a8a8a">0 mm</div>
<div class="t" style="left:1254px;top:691px;font-size:12px;color:#111">29%</div>
<div class="t" style="left:1313px;top:691px;font-size:12px;color:#111">7:41</div>
</body></html>
